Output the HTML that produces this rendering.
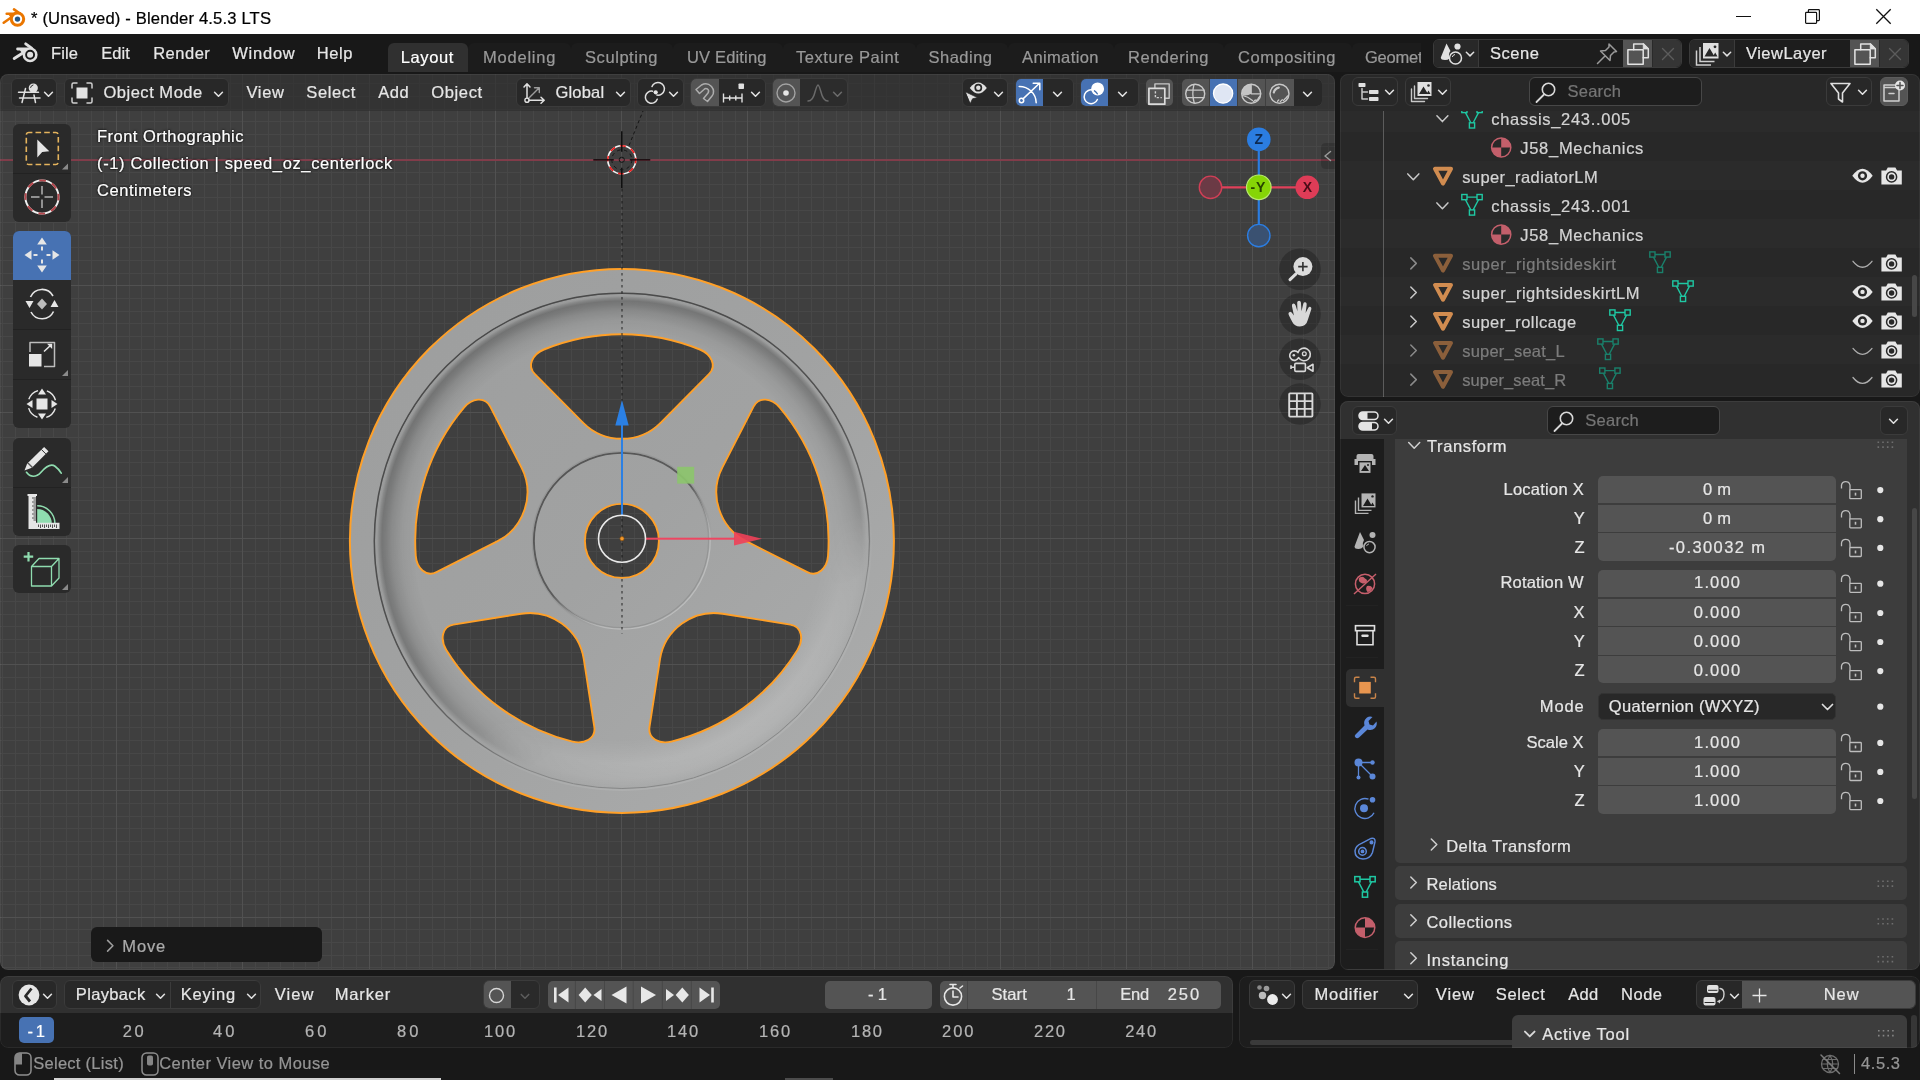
<!DOCTYPE html>
<html lang="en">
<head>
<meta charset="utf-8">
<title>* (Unsaved) - Blender 4.5.3 LTS</title>
<style>
*{box-sizing:border-box;margin:0;padding:0}
html,body{width:1920px;height:1080px;overflow:hidden;background:#181818}
body{font-family:"Liberation Sans",sans-serif;font-size:16.5px;color:#e6e6e6;position:relative}
.abs,.t,.area,.btn,svg.i,.fld{position:absolute}
.t{white-space:nowrap;line-height:20px;height:20px;-webkit-text-stroke-width:0.22px}
svg{overflow:visible;position:absolute}
svg.i{fill:none;stroke:#e0e0e0;stroke-width:1.6;stroke-linecap:round;stroke-linejoin:round}
.area{background:#303030;border-radius:8px;overflow:hidden}
.area:after{content:"";position:absolute;left:0;top:0;right:0;bottom:0;border:1px solid rgba(255,255,255,0.06);border-radius:8px;pointer-events:none}
.btn{background:#282828;border:1px solid #3b3b3b;border-radius:6px}
.fld{background:#545454;border-radius:5px}
.dim{color:#999}
/* title bar */
#titlebar{left:0;top:0;width:1920px;height:34px;background:#fff}
/* top bar */
#topbar{left:0;top:34px;width:1920px;height:40px;background:#181818}
.tab{position:absolute;top:8.5px;height:29.5px;background:#1c1c1c;border-radius:6px 6px 0 0}
.tab.on{background:#303030}
</style>
</head>
<body>
<div id="root" style="position:absolute;left:0;top:0;width:1920px;height:1080px;will-change:transform;overflow:hidden">
<svg width="0" height="0" style="left:0;top:0"><defs>
 <symbol id="chev" viewBox="0 0 12 8" overflow="visible"><path d="M1.5 1.5 L6 6 L10.5 1.5" fill="none" stroke="currentColor" stroke-width="1.8" stroke-linecap="round" stroke-linejoin="round"/></symbol>
 <symbol id="chevR" viewBox="0 0 8 12" overflow="visible"><path d="M1.5 1 L6.5 6 L1.5 11" fill="none" stroke="currentColor" stroke-width="1.5" stroke-linecap="round" stroke-linejoin="round"/></symbol>
</defs></svg>
<!-- ===== TITLE BAR ===== -->
<div id="titlebar" class="abs">
<svg style="left:0;top:0.500px" width="30" height="34" viewBox="0 0 30 34" fill="none" stroke-linecap="round">
<path d="M14 8.400L20.200 12.800M6.700 12.800H16M3.700 21.700L12.500 15.500" stroke="#ea7600" stroke-width="2.600"/>
<path d="M8 13L18 12L11 17Z" fill="#ea7600"/>
<circle cx="17.500" cy="18.100" r="6.200" fill="#fff" stroke="#ea7600" stroke-width="3"/>
<circle cx="17.500" cy="18.100" r="2.700" fill="#265787"/>
</svg>
<span class="t" style="left:31.0px;top:8.6px;letter-spacing:0.17px;font-size:16.6px;color:#000">* (Unsaved) - Blender 4.5.3 LTS</span>
<!-- window controls -->
<div class="abs" style="left:1736px;top:15.700px;width:15px;height:1.300px;background:#111"></div>
<svg style="left:1805px;top:9px" width="15" height="15" viewBox="0 0 15 15" fill="none" stroke="#111" stroke-width="1.200"><rect x="0.600" y="3.400" width="11" height="11" rx="0.800"/><path d="M3.400 3.200V1.400Q3.400 0.600 4.200 0.600H13.600Q14.400 0.600 14.400 1.400V10.800Q14.400 11.600 13.600 11.600H11.800"/></svg>
<svg style="left:1876px;top:9px" width="15" height="15" viewBox="0 0 15 15" fill="none" stroke="#111" stroke-width="1.300"><path d="M0.300 0.300L14.700 14.700M14.700 0.300L0.300 14.700"/></svg>
</div>
<!-- ===== TOP BAR ===== -->
<div id="topbar" class="abs">
<svg style="left:0;top:0" width="44" height="40" viewBox="0 0 44 40" fill="none" stroke-linecap="round">
<path d="M25.700 9.900L31.600 14.200M17.600 15H27M14.200 24.500L24 18.200" stroke="#e0e0e0" stroke-width="2.900"/>
<path d="M19.500 15.500L30 14L22.500 20Z" fill="#e0e0e0"/>
<circle cx="30.100" cy="20.800" r="7.500" fill="#e0e0e0"/>
<circle cx="30.100" cy="20.800" r="4" fill="none" stroke="#181818" stroke-width="1.900"/>
</svg>
<span class="t" style="left:51.0px;top:9.2px;letter-spacing:0.14px;">File</span><span class="t" style="left:101.2px;top:9.2px;letter-spacing:0.06px;">Edit</span><span class="t" style="left:153.2px;top:9.2px;letter-spacing:0.50px;">Render</span><span class="t" style="left:232.2px;top:9.2px;letter-spacing:0.78px;">Window</span><span class="t" style="left:316.8px;top:9.2px;letter-spacing:0.55px;">Help</span>
<div class="tab on" style="left:388px;width:80px"></div>
<div class="tab" style="left:468px;width:103px"></div>
<div class="tab" style="left:571px;width:102px"></div>
<div class="tab" style="left:673px;width:109.500px"></div>
<div class="tab" style="left:782.500px;width:133.500px"></div>
<div class="tab" style="left:916px;width:92px"></div>
<div class="tab" style="left:1008px;width:106px"></div>
<div class="tab" style="left:1114px;width:110px"></div>
<div class="tab" style="left:1224px;width:128px"></div>
<div class="tab" style="left:1352px;width:69px;border-radius:6px 0 0 0"></div>
<span class="t" style="left:400.8px;top:12.6px;letter-spacing:0.61px;color:#fff">Layout</span>
<span class="t dim" style="left:483.0px;top:12.6px;letter-spacing:0.78px;">Modeling</span><span class="t dim" style="left:585.0px;top:12.6px;letter-spacing:0.57px;">Sculpting</span><span class="t dim" style="left:687.0px;top:12.6px;letter-spacing:0.16px;">UV Editing</span><span class="t dim" style="left:796.0px;top:12.6px;letter-spacing:0.54px;">Texture Paint</span><span class="t dim" style="left:928.6px;top:12.6px;letter-spacing:0.47px;">Shading</span><span class="t dim" style="left:1022.0px;top:12.6px;letter-spacing:0.38px;">Animation</span><span class="t dim" style="left:1128.0px;top:12.6px;letter-spacing:0.53px;">Rendering</span><span class="t dim" style="left:1238.0px;top:12.6px;letter-spacing:0.57px;">Compositing</span>
<div class="abs" style="left:1352px;top:8px;width:69px;height:32px;overflow:hidden"><span class="t dim" style="left:13.0px;top:4.6px;letter-spacing:-0.21px;">Geometry Nodes</span></div>
<!-- scene selector -->
<div class="btn" style="left:1433px;top:5px;width:249px;height:29px;overflow:hidden;background:#1d1d1d">
 <div class="abs" style="left:0;top:0;width:45px;height:27px;background:#282828;border-right:1px solid #3b3b3b"></div>
 <div class="abs" style="left:189px;top:0;width:29px;height:27px;background:#545454"></div>
 <div class="abs" style="left:218px;top:0;width:30px;height:27px;background:#353535;border-left:1px solid #2a2a2a"></div>
</div>
<span class="t" style="left:1490.0px;top:9.0px;letter-spacing:0.55px;">Scene</span>
<!-- view layer selector -->
<div class="btn" style="left:1689px;top:5px;width:220px;height:29px;overflow:hidden;background:#1d1d1d">
 <div class="abs" style="left:0;top:0;width:45px;height:27px;background:#282828;border-right:1px solid #3b3b3b"></div>
 <div class="abs" style="left:160px;top:0;width:29px;height:27px;background:#545454"></div>
 <div class="abs" style="left:189px;top:0;width:30px;height:27px;background:#353535;border-left:1px solid #2a2a2a"></div>
</div>
<span class="t" style="left:1746.0px;top:9.0px;letter-spacing:0.48px;">ViewLayer</span>
<!-- scene icons -->
<svg style="left:1440px;top:8px" width="24" height="24" viewBox="0 0 24 24"><path d="M6.500 1.500L0.800 15.500Q0.800 18 5 18Q8 18 9.500 16.500Q8 12 10.500 9Z" fill="#e0e0e0"/><circle cx="17.500" cy="4.500" r="3.100" fill="#e0e0e0"/><circle cx="15.500" cy="16" r="6" fill="none" stroke="#e0e0e0" stroke-width="1.500"/><path d="M12.300 15A3.400 3.400 0 0 1 15 12.500" stroke="#e0e0e0" stroke-width="1" fill="none"/></svg>
<svg style="left:1465px;top:16.500px;color:#e0e0e0" width="10" height="6.500"><use href="#chev"/></svg>
<svg class="i" style="left:1596px;top:8px" width="23" height="23" viewBox="0 0 23 23"><path d="M13 2L20.500 9.500L18 10L14.500 13.500L14 18.500L4.500 9L9.500 8.500L13 5ZM9 14L1.500 21.500" stroke="#9a9a9a" stroke-width="1.500"/></svg>
<svg class="i" style="left:1627px;top:9px" width="22" height="22" viewBox="0 0 22 22"><path d="M6.700 6.700V0.900H16.300L21.300 5.900V14.700H16.200" stroke="#e0e0e0" stroke-width="1.500"/><path d="M16.300 0.900V5.900H21.300Z" fill="#e0e0e0" stroke="#e0e0e0" stroke-width="1"/><rect x="0.900" y="6.700" width="15.300" height="14.600" stroke="#e4e4e4" stroke-width="1.500"/></svg>
<svg class="i" style="left:1661.500px;top:14px" width="12" height="12" viewBox="0 0 12 12"><path d="M0.500 0.500L11.500 11.500M11.500 0.500L0.500 11.500" stroke="#5c5c5c" stroke-width="1.400"/></svg>
<svg style="left:1695px;top:8px" width="25" height="24" viewBox="0 0 25 24"><rect x="8" y="1" width="15.500" height="15.500" fill="#e0e0e0"/><path d="M9.500 14.500L14.500 6L19.500 14.500ZM18 14.500L20.200 10.500L22.500 14.500Z" fill="#282828"/><circle cx="20" cy="4.800" r="1.400" fill="#282828"/><path d="M5 5V19.500H19.500M1.500 8.500V23H16" stroke="#d0d0d0" stroke-width="1.500" fill="none"/></svg>
<svg style="left:1721.500px;top:16.500px;color:#e0e0e0" width="10" height="6.500"><use href="#chev"/></svg>
<svg class="i" style="left:1854px;top:9px" width="22" height="22" viewBox="0 0 22 22"><path d="M6.700 6.700V0.900H16.300L21.300 5.900V14.700H16.200" stroke="#e0e0e0" stroke-width="1.500"/><path d="M16.300 0.900V5.900H21.300Z" fill="#e0e0e0" stroke="#e0e0e0" stroke-width="1"/><rect x="0.900" y="6.700" width="15.300" height="14.600" stroke="#e4e4e4" stroke-width="1.500"/></svg>
<svg class="i" style="left:1888.500px;top:14px" width="12" height="12" viewBox="0 0 12 12"><path d="M0.500 0.500L11.500 11.500M11.500 0.500L0.500 11.500" stroke="#5c5c5c" stroke-width="1.400"/></svg>
</div>
<!-- ===== 3D VIEWPORT ===== -->
<div id="view3d" class="area" style="left:0;top:74px;width:1335px;height:895.700px;background:#3f3f3f">
<svg style="left:0;top:0" width="1335" height="895" viewBox="0 74 1335 895">
<defs>
 <path id="hole" d="M-78,-191.4 A206.5,206.5 0 0 1 78,-191.4 C89.1,-186.8 95.5,-175.2 87,-166.7 L38.7,-118.1 C17.5,-96.9 -17.5,-96.9 -38.7,-118.1 L-87,-166.7 C-95.5,-175.2 -89.1,-186.8 -78,-191.4 Z"/>
 <g id="holes">
  <use href="#hole"/><use href="#hole" transform="rotate(72)"/><use href="#hole" transform="rotate(144)"/><use href="#hole" transform="rotate(216)"/><use href="#hole" transform="rotate(288)"/>
  <circle r="37"/>
 </g>
 <mask id="wheelMask" maskUnits="userSpaceOnUse" x="-280" y="-280" width="560" height="560">
  <circle r="272" fill="#fff"/><use href="#holes" fill="#000"/>
 </mask>
 <linearGradient id="gUL" x1="0.25" y1="0.07" x2="0.75" y2="0.93"><stop offset="0" stop-color="#fff"/><stop offset="0.5" stop-color="#ddd"/><stop offset="0.66" stop-color="#777"/><stop offset="0.77" stop-color="#000"/></linearGradient>
 <linearGradient id="gLR" x1="0.25" y1="0.07" x2="0.75" y2="0.93"><stop offset="0.66" stop-color="#000"/><stop offset="0.8" stop-color="#999"/><stop offset="0.94" stop-color="#fff"/></linearGradient>
 <mask id="mUL" maskUnits="userSpaceOnUse" x="-280" y="-280" width="560" height="560"><rect x="-280" y="-280" width="560" height="560" fill="url(#gUL)"/></mask>
 <mask id="mLR" maskUnits="userSpaceOnUse" x="-280" y="-280" width="560" height="560"><rect x="-280" y="-280" width="560" height="560" fill="url(#gLR)"/></mask>
 <linearGradient id="gUL2" x1="0.2" y1="0.12" x2="0.8" y2="0.88"><stop offset="0" stop-color="#fff"/><stop offset="0.5" stop-color="#ccc"/><stop offset="0.56" stop-color="#555"/><stop offset="0.6" stop-color="#000"/></linearGradient>
 <linearGradient id="gLR2" x1="0.2" y1="0.12" x2="0.8" y2="0.88"><stop offset="0.5" stop-color="#000"/><stop offset="0.56" stop-color="#888"/><stop offset="0.62" stop-color="#fff"/></linearGradient>
 <mask id="mUL2" maskUnits="userSpaceOnUse" x="-280" y="-280" width="560" height="560"><rect x="-280" y="-280" width="560" height="560" fill="url(#gUL2)"/></mask>
 <mask id="mLR2" maskUnits="userSpaceOnUse" x="-280" y="-280" width="560" height="560"><rect x="-280" y="-280" width="560" height="560" fill="url(#gLR2)"/></mask>
 <radialGradient id="dishShadow" gradientUnits="userSpaceOnUse" cx="0" cy="0" r="247.6">
  <stop offset="0.84" stop-color="#000" stop-opacity="0"/><stop offset="0.89" stop-color="#000" stop-opacity="0.05"/><stop offset="0.93" stop-color="#000" stop-opacity="0.14"/><stop offset="0.955" stop-color="#000" stop-opacity="0.24"/><stop offset="0.969" stop-color="#000" stop-opacity="0.28"/><stop offset="0.981" stop-color="#000" stop-opacity="0.15"/><stop offset="0.989" stop-color="#000" stop-opacity="0.03"/><stop offset="1" stop-color="#000" stop-opacity="0"/>
 </radialGradient>
 <radialGradient id="dishLight" gradientUnits="userSpaceOnUse" cx="0" cy="0" r="247.6">
  <stop offset="0.80" stop-color="#fff" stop-opacity="0"/><stop offset="0.90" stop-color="#fff" stop-opacity="0.17"/><stop offset="0.96" stop-color="#fff" stop-opacity="0.12"/><stop offset="1" stop-color="#fff" stop-opacity="0.02"/>
 </radialGradient>
 <linearGradient id="faceG" gradientUnits="userSpaceOnUse" x1="-190" y1="-190" x2="190" y2="190"><stop offset="0" stop-color="#9e9f9f"/><stop offset="0.5" stop-color="#a1a2a2"/><stop offset="1" stop-color="#a9aaaa"/></linearGradient>
</defs>
<path fill="#474747" d="M2 74h1v895h-1zM15 74h1v895h-1zM28 74h1v895h-1zM40 74h1v895h-1zM53 74h1v895h-1zM66 74h1v895h-1zM78 74h1v895h-1zM91 74h1v895h-1zM103 74h1v895h-1zM129 74h1v895h-1zM141 74h1v895h-1zM154 74h1v895h-1zM167 74h1v895h-1zM179 74h1v895h-1zM192 74h1v895h-1zM204 74h1v895h-1zM217 74h1v895h-1zM230 74h1v895h-1zM255 74h1v895h-1zM268 74h1v895h-1zM280 74h1v895h-1zM293 74h1v895h-1zM305 74h1v895h-1zM318 74h1v895h-1zM331 74h1v895h-1zM343 74h1v895h-1zM356 74h1v895h-1zM381 74h1v895h-1zM394 74h1v895h-1zM406 74h1v895h-1zM419 74h1v895h-1zM432 74h1v895h-1zM444 74h1v895h-1zM457 74h1v895h-1zM470 74h1v895h-1zM482 74h1v895h-1zM507 74h1v895h-1zM520 74h1v895h-1zM533 74h1v895h-1zM545 74h1v895h-1zM558 74h1v895h-1zM571 74h1v895h-1zM583 74h1v895h-1zM596 74h1v895h-1zM608 74h1v895h-1zM634 74h1v895h-1zM646 74h1v895h-1zM659 74h1v895h-1zM672 74h1v895h-1zM684 74h1v895h-1zM697 74h1v895h-1zM709 74h1v895h-1zM722 74h1v895h-1zM735 74h1v895h-1zM760 74h1v895h-1zM773 74h1v895h-1zM785 74h1v895h-1zM798 74h1v895h-1zM811 74h1v895h-1zM823 74h1v895h-1zM836 74h1v895h-1zM848 74h1v895h-1zM861 74h1v895h-1zM886 74h1v895h-1zM899 74h1v895h-1zM912 74h1v895h-1zM924 74h1v895h-1zM937 74h1v895h-1zM949 74h1v895h-1zM962 74h1v895h-1zM975 74h1v895h-1zM987 74h1v895h-1zM1013 74h1v895h-1zM1025 74h1v895h-1zM1038 74h1v895h-1zM1050 74h1v895h-1zM1063 74h1v895h-1zM1076 74h1v895h-1zM1088 74h1v895h-1zM1101 74h1v895h-1zM1114 74h1v895h-1zM1139 74h1v895h-1zM1151 74h1v895h-1zM1164 74h1v895h-1zM1177 74h1v895h-1zM1189 74h1v895h-1zM1202 74h1v895h-1zM1215 74h1v895h-1zM1227 74h1v895h-1zM1240 74h1v895h-1zM1265 74h1v895h-1zM1278 74h1v895h-1zM1290 74h1v895h-1zM1303 74h1v895h-1zM1316 74h1v895h-1zM1328 74h1v895h-1zM0 83h1335v1h-1335zM0 96h1335v1h-1335zM0 109h1335v1h-1335zM0 121h1335v1h-1335zM0 134h1335v1h-1335zM0 146h1335v1h-1335zM0 172h1335v1h-1335zM0 184h1335v1h-1335zM0 197h1335v1h-1335zM0 210h1335v1h-1335zM0 222h1335v1h-1335zM0 235h1335v1h-1335zM0 247h1335v1h-1335zM0 260h1335v1h-1335zM0 273h1335v1h-1335zM0 298h1335v1h-1335zM0 311h1335v1h-1335zM0 323h1335v1h-1335zM0 336h1335v1h-1335zM0 349h1335v1h-1335zM0 361h1335v1h-1335zM0 374h1335v1h-1335zM0 386h1335v1h-1335zM0 399h1335v1h-1335zM0 424h1335v1h-1335zM0 437h1335v1h-1335zM0 450h1335v1h-1335zM0 462h1335v1h-1335zM0 475h1335v1h-1335zM0 487h1335v1h-1335zM0 500h1335v1h-1335zM0 513h1335v1h-1335zM0 525h1335v1h-1335zM0 551h1335v1h-1335zM0 563h1335v1h-1335zM0 576h1335v1h-1335zM0 588h1335v1h-1335zM0 601h1335v1h-1335zM0 614h1335v1h-1335zM0 626h1335v1h-1335zM0 639h1335v1h-1335zM0 652h1335v1h-1335zM0 677h1335v1h-1335zM0 689h1335v1h-1335zM0 702h1335v1h-1335zM0 715h1335v1h-1335zM0 727h1335v1h-1335zM0 740h1335v1h-1335zM0 753h1335v1h-1335zM0 765h1335v1h-1335zM0 778h1335v1h-1335zM0 803h1335v1h-1335zM0 816h1335v1h-1335zM0 828h1335v1h-1335zM0 841h1335v1h-1335zM0 854h1335v1h-1335zM0 866h1335v1h-1335zM0 879h1335v1h-1335zM0 891h1335v1h-1335zM0 904h1335v1h-1335zM0 929h1335v1h-1335zM0 942h1335v1h-1335zM0 955h1335v1h-1335zM0 967h1335v1h-1335z"/>
<path fill="#515151" d="M116 74h1v895h-1zM242 74h1v895h-1zM369 74h1v895h-1zM495 74h1v895h-1zM621 74h1v895h-1zM747 74h1v895h-1zM874 74h1v895h-1zM1000 74h1v895h-1zM1126 74h1v895h-1zM1252 74h1v895h-1zM0 159h1335v1h-1335zM0 285h1335v1h-1335zM0 412h1335v1h-1335zM0 538h1335v1h-1335zM0 664h1335v1h-1335zM0 790h1335v1h-1335zM0 917h1335v1h-1335z"/>
<!-- x axis line -->
<rect x="0" y="159.3" width="1335" height="1.6" fill="#8a3b4b"/>
<!-- wheel -->
<g transform="translate(621.9 540.9)">
 <g mask="url(#wheelMask)">
  <circle r="273" fill="url(#faceG)"/>
  <circle r="247.6" fill="none" stroke="#868787" stroke-width="1"/>
  <circle r="247.6" fill="url(#dishShadow)" mask="url(#mUL)"/>
  <circle r="247.6" fill="url(#dishLight)" mask="url(#mLR)"/>
  <circle r="247.6" fill="none" stroke="#484848" stroke-width="1.5" mask="url(#mUL)"/>
  <circle r="249.2" fill="none" stroke="#b4b5b5" stroke-width="1.6" mask="url(#mLR)" opacity="0.7"/>
  <circle r="88" fill="none" stroke="#4a4a4a" stroke-width="1.9" mask="url(#mUL2)"/>
  <circle r="89.6" fill="none" stroke="#8c8d8d" stroke-width="1.2" mask="url(#mUL2)" opacity="0.6"/>
  <circle r="88.3" fill="none" stroke="#bcbdbd" stroke-width="1.3" mask="url(#mLR2)"/>
  <circle r="86.6" fill="none" stroke="#8f9090" stroke-width="1.1" mask="url(#mLR2)" opacity="0.8"/>
 </g>
 <circle r="272" fill="none" stroke="#ffa028" stroke-width="2"/>
 <use href="#holes" fill="none" stroke="#ffa028" stroke-width="1.9"/>
</g>
<!-- relationship dashed lines -->
<path d="M622 189 V633.5" stroke="#141414" stroke-width="1.1" stroke-dasharray="2.6 3.4" fill="none" opacity="0.8"/>
<path d="M629 145.5 L643 111" stroke="#141414" stroke-width="1" stroke-dasharray="3.2 2.8" fill="none"/>
<!-- 3d cursor -->
<g transform="translate(621.8 159.8)">
 <circle r="14" fill="none" stroke="#f3f3f3" stroke-width="1.6"/>
 <circle r="14" fill="none" stroke="#ee1c1c" stroke-width="1.6" stroke-dasharray="5.5 5.5" transform="rotate(-8)"/>
 <path d="M-28.5 0H-8M8 0H28.5M0 -28.5V-8M0 8V28.5" stroke="#000" stroke-width="1.2" fill="none"/>
 <circle r="10" fill="none" stroke="#151515" stroke-width="1" stroke-dasharray="3.5 3.5"/>
 <circle r="2.6" fill="none" stroke="#151515" stroke-width="1"/>
</g>
<!-- move gizmo -->
<rect x="621" y="425" width="2" height="90" fill="#2b80e4"/>
<path d="M622 400 L628.7 425.6 L615.3 425.6 Z" fill="#2b80e4"/>
<rect x="646" y="537.7" width="89" height="2" fill="#ee4661"/>
<path d="M762 538.7 L734 531.8 L734 545.6 Z" fill="#f04058" opacity="0.9"/>
<rect x="677.2" y="466.8" width="17" height="16.8" fill="#8cc46c" opacity="0.92"/>
<circle cx="622" cy="538.7" r="23.5" fill="none" stroke="#e9e9e9" stroke-width="1.6"/>
<circle cx="622" cy="538.7" r="2.1" fill="#f39a2c" stroke="#8a4a05" stroke-width="0.6"/>
</svg>
<!-- header -->
<div class="abs" style="left:0;top:0;width:1335px;height:37px;background:rgba(46,46,46,0.68)"></div>
<!-- editor type -->
<div class="btn" style="left:11px;top:4px;width:46px;height:29px"></div>
<svg class="i" style="left:17px;top:8px" width="24" height="22" viewBox="0 0 24 22"><path d="M1.5 10.2H21.5M2.5 16H23M8.5 6.5L5 20.5M17 13L18.5 20.5" stroke-width="1.5"/><circle cx="16.3" cy="6" r="4.6" fill="#e0e0e0" stroke="none"/><path d="M13.6 5.4A3 3 0 0 1 16 3" stroke="#2b2b2b" stroke-width="1"/></svg>
<svg style="left:43px;top:17px;color:#e0e0e0" width="11" height="7"><use href="#chev"/></svg>
<!-- object mode -->
<div class="btn" style="left:64px;top:4px;width:165px;height:29px"></div>
<svg class="i" style="left:71px;top:8px" width="22" height="22" viewBox="0 0 22 22"><rect x="5.5" y="5.5" width="11" height="11" fill="#e4e4e4" stroke="none"/><path d="M1 6V2.5Q1 1 2.5 1H6M16 1h3.5Q21 1 21 2.5V6M21 16v3.5Q21 21 19.500 21H16M6 21H2.5Q1 21 1 19.500V16" stroke="#cfcfcf" stroke-width="1.5"/></svg>
<span class="t" style="left:103.4px;top:8.0px;letter-spacing:0.53px;">Object Mode</span>
<svg style="left:213px;top:17px;color:#e0e0e0" width="11" height="7"><use href="#chev"/></svg>
<span class="t" style="left:246.4px;top:8.0px;letter-spacing:0.71px;">View</span><span class="t" style="left:306.3px;top:8.0px;letter-spacing:0.63px;">Select</span><span class="t" style="left:378.2px;top:8.0px;letter-spacing:0.62px;">Add</span><span class="t" style="left:431.2px;top:8.0px;letter-spacing:0.66px;">Object</span>
<!-- orientation -->
<div class="btn" style="left:516px;top:4px;width:115px;height:29px"></div>
<svg class="i" style="left:523px;top:7.500px" width="23" height="22" viewBox="0 0 23 22"><path d="M5.200 16.800L16 6M11.500 5.700H16.300V10.500" stroke="#9c9c9c" stroke-width="1.400"/><path d="M4 16.300V2M1 5L4 1.800L7 5M5.800 18.200H21M18 15.200L21.200 18.200L18 21.200" stroke-width="1.500"/><circle cx="4" cy="18.200" r="2.100" stroke-width="1.400"/></svg>
<span class="t" style="left:555.4px;top:8.0px;letter-spacing:0.22px;">Global</span>
<svg style="left:615px;top:17px;color:#e0e0e0" width="11" height="7"><use href="#chev"/></svg>
<!-- pivot -->
<div class="btn" style="left:636.5px;top:4px;width:47px;height:29px"></div>
<svg class="i" style="left:644px;top:8px" width="22" height="22" viewBox="0 0 22 22"><path d="M8 4.600A6.400 6.400 0 1 1 12.900 13.100M13.200 17.300A6.100 6.100 0 1 1 8.600 9.200" stroke-width="1.500"/><circle cx="11.700" cy="10.300" r="2.100" fill="#e8e8e8" stroke="none"/></svg>
<svg style="left:668px;top:17px;color:#e0e0e0" width="11" height="7"><use href="#chev"/></svg>
<!-- snap -->
<div class="btn" style="left:689.5px;top:4px;width:76px;height:29px;overflow:hidden"><div class="abs" style="left:0;top:0;width:28px;height:27px;background:#545454"></div></div>
<svg class="i" style="left:694px;top:9px" width="22" height="21" viewBox="0 0 22 21"><path d="M2 6.500L7.500 2Q13 -1 17.500 3.500Q21.500 8.500 18 13L13.500 18.500L9.500 15.500L14 10Q15.500 7.500 13.500 6Q11.500 4.800 10 6.500L5.500 10.500Z" stroke="#adadad" stroke-width="1.5"/></svg>
<svg class="i" style="left:722px;top:9px" width="22" height="21" viewBox="0 0 22 21"><path d="M1.500 10.500V19.500M20 10.500V19.500M1.500 15H20M7.700 12.500V17.500M13.800 12.500V17.500" stroke-width="1.400" stroke-linecap="butt"/><rect x="16.500" y="0.500" width="5.500" height="5.500" rx="0.800" fill="#e0e0e0" stroke="none"/></svg>
<svg style="left:750px;top:17px;color:#e0e0e0" width="11" height="7"><use href="#chev"/></svg>
<!-- proportional -->
<div class="btn" style="left:771.5px;top:4px;width:76px;height:29px;overflow:hidden;background:#2c2c2c"><div class="abs" style="left:0;top:0;width:27px;height:27px;background:#545454"></div></div>
<svg class="i" style="left:776px;top:9px" width="20" height="20" viewBox="0 0 20 20"><circle cx="10" cy="10" r="9" stroke="#a2a2a2" stroke-width="1.400"/><circle cx="10" cy="10" r="2.800" fill="#e6e6e6" stroke="none"/></svg>
<svg class="i" style="left:807px;top:10px" width="22" height="18" viewBox="0 0 22 18"><path d="M1 17Q6 17 8 8Q10 1 11 1Q12 1 14 8Q16 17 21 17" stroke="#6a6a6a" stroke-width="1.5"/></svg>
<svg style="left:832px;top:17px;color:#6a6a6a" width="11" height="7"><use href="#chev"/></svg>
<!-- visibility -->
<div class="btn" style="left:962px;top:4px;width:46px;height:29px"></div>
<svg class="i" style="left:965px;top:8px" width="24" height="22" viewBox="0 0 24 22"><path d="M4.800 5.900Q9 0.400 13.300 0.400Q17.600 0.400 21.800 5.900Q17.600 11.400 13.300 11.400Q9 11.400 4.800 5.900Z" fill="#e0e0e0" stroke="none"/><circle cx="13.300" cy="5.700" r="3.900" fill="#282828" stroke="none"/><circle cx="13.300" cy="5.700" r="2.200" fill="#e0e0e0" stroke="none"/><path d="M0.400 9.800L12.600 15.600L7.600 16.800L5.300 21.500Z" fill="#e0e0e0" stroke="#282828" stroke-width="0.800"/></svg>
<svg style="left:993px;top:17px;color:#e0e0e0" width="11" height="7"><use href="#chev"/></svg>
<!-- gizmo -->
<div class="btn" style="left:1015px;top:4px;width:59px;height:29px;overflow:hidden"><div class="abs" style="left:0;top:0;width:27px;height:27px;background:#4772b3"></div></div>
<svg class="i" style="left:1019px;top:8px" width="22" height="22" viewBox="0 0 22 22"><path d="M0.200 4.400A16.800 16.800 0 0 1 17.200 20.700M4 16.900L20.500 1.200M14.200 1.300H20.800V7.800" stroke="#fff" stroke-width="1.500"/><circle cx="2.500" cy="18.500" r="2.200" stroke="#fff" stroke-width="1.500"/></svg>
<svg style="left:1052px;top:17px;color:#e0e0e0" width="11" height="7"><use href="#chev"/></svg>
<!-- overlay -->
<div class="btn" style="left:1080px;top:4px;width:59px;height:29px;overflow:hidden"><div class="abs" style="left:0;top:0;width:27px;height:27px;background:#4772b3"></div></div>
<svg class="i" style="left:1084px;top:8px" width="22" height="22" viewBox="0 0 22 22"><circle cx="13.600" cy="6.900" r="6.500" fill="#fff" stroke="none"/><path d="M9.500 8.300A6.900 6.900 0 1 0 13.400 17.500" stroke="#fff" stroke-width="1.500"/><path d="M10.500 8.800A6.900 6.900 0 0 1 13.300 11.800" stroke="#4772b3" stroke-width="1.400"/></svg>
<svg style="left:1117px;top:17px;color:#e0e0e0" width="11" height="7"><use href="#chev"/></svg>
<!-- xray -->
<div class="abs" style="left:1146px;top:5px;width:27px;height:27.300px;background:#545454;border-radius:5px"></div>
<svg class="i" style="left:1148px;top:8.500px" width="22" height="22" viewBox="0 0 22 22"><path d="M6.900 5V0.900H21.200V15.300H17.200" stroke="#c8c8c8" stroke-width="1.400"/><rect x="0.900" y="5.400" width="15.900" height="15.800" stroke="#dcdcdc" stroke-width="1.700"/><path d="M7.400 8.300V14.600H13.800" stroke="#d0d0d0" stroke-width="1.400" stroke-dasharray="2.200 1.600" stroke-linecap="butt"/></svg>
<!-- shading -->
<div class="abs" style="left:1182px;top:5px;width:140px;height:27.300px;background:#545454;border-radius:5px;overflow:hidden">
 <div class="abs" style="left:28px;top:0;width:27.300px;height:28px;background:#4772b3"></div>
 <div class="abs" style="left:27.300px;top:0;width:0.700px;height:28px;background:#3f3f3f"></div>
 <div class="abs" style="left:55.300px;top:0;width:0.700px;height:28px;background:#3f3f3f"></div>
 <div class="abs" style="left:83.300px;top:0;width:0.700px;height:28px;background:#3f3f3f"></div>
 <div class="abs" style="left:111.500px;top:0;width:29px;height:28px;background:#282828"></div>
</div>
<svg class="i" style="left:1185px;top:8.800px" width="22" height="22" viewBox="0 0 22 22"><circle cx="10.200" cy="10.800" r="9.500" stroke="#c8c8c8" stroke-width="1.400"/><path d="M1.500 7.200H18.900M1.500 14.600H18.900M9 1.400Q6.500 10.800 9.300 20.200" stroke="#c8c8c8" stroke-width="1.300"/></svg>
<svg class="i" style="left:1213px;top:8.800px" width="22" height="22" viewBox="0 0 22 22"><circle cx="10.100" cy="10.600" r="9.600" fill="#dfe6f4" stroke="#fff" stroke-width="1.300"/></svg>
<svg class="i" style="left:1241px;top:8.800px" width="22" height="22" viewBox="0 0 22 22"><path d="M10.200 10.800V1.300A9.500 9.500 0 0 0 0.700 10.800Q1 11.500 2 12.200Q6 13.500 10.200 10.800Z" fill="#c4c4c4" stroke="none"/><circle cx="10.200" cy="10.800" r="9.500" stroke="#c8c8c8" stroke-width="1.400"/><path d="M10.200 1.300V10.800H19.700M1.500 12.500Q7 13.500 11.500 17.500" stroke="#c8c8c8" stroke-width="1.200"/><path d="M12.500 18.800L14.300 17M15.200 17.600L17.200 15.600M17.500 15L19 13.200" stroke="#c8c8c8" stroke-width="1.300"/></svg>
<svg class="i" style="left:1269px;top:8.800px" width="22" height="22" viewBox="0 0 22 22"><circle cx="10.500" cy="10.800" r="9.500" stroke="#c8c8c8" stroke-width="1.400"/><path d="M4.800 9.500A6.800 6.800 0 0 1 9.800 4.600" stroke="#c8c8c8" stroke-width="2.200"/><path d="M8.500 18.300L9.800 17M11.300 18.600L13.300 16.600M14.300 17.600L16.600 15.300M17 15L18.600 13" stroke="#c8c8c8" stroke-width="1.300"/></svg>
<svg style="left:1301.500px;top:17px;color:#e0e0e0" width="11" height="7"><use href="#chev"/></svg>
<!-- toolbar -->
<div class="abs" style="left:13px;top:50px;width:58px;height:98px;background:#2a2a2a;border-radius:6px"></div>
<div class="abs" style="left:13px;top:98.5px;width:58px;height:1px;background:#222"></div>
<div class="abs" style="left:13px;top:157px;width:58px;height:197px;background:#2a2a2a;border-radius:6px;overflow:hidden"><div class="abs" style="left:0;top:0;width:58px;height:48.5px;background:#4772b3"></div></div>
<div class="abs" style="left:13px;top:255px;width:58px;height:1px;background:#222"></div>
<div class="abs" style="left:13px;top:304.5px;width:58px;height:1px;background:#222"></div>
<div class="abs" style="left:13px;top:364px;width:58px;height:97.5px;background:#2a2a2a;border-radius:6px"></div>
<div class="abs" style="left:13px;top:412.5px;width:58px;height:1px;background:#222"></div>
<div class="abs" style="left:13px;top:471px;width:58px;height:48px;background:#2a2a2a;border-radius:6px"></div>
<svg style="left:13px;top:50px" width="58" height="470" viewBox="13 124 58 470" fill="none" stroke-linecap="butt" stroke-linejoin="round">
 <!-- select box -->
 <rect x="26.3" y="132.5" width="32" height="32" rx="2.5" stroke="#e5b45d" stroke-width="1.600" stroke-dasharray="5.600 3.100" stroke-dashoffset="2"/>
 <path d="M37.3 139.5 L49.3 151.2 L42.2 152 L37.3 157.5 Z" fill="#e6e6e6"/>
 <path d="M68 163.500V169.500H62Z" fill="#8a8a8a"/>
 <!-- cursor -->
 <circle cx="42" cy="197" r="16.600" stroke="#f0f0f0" stroke-width="1.900"/>
 <circle cx="42" cy="197" r="16.600" stroke="#b5464c" stroke-width="1.900" stroke-dasharray="6.520 6.520" transform="rotate(-11 42 197)"/>
 <path d="M31 197H39.500M44.500 197H53M42 186V194.500M42 199.500V208" stroke="#b4b4b4" stroke-width="1.500"/>
 <!-- move -->
 <g fill="#e6e6e6" stroke="none"><path d="M42 237.500L46.800 244.500H37.200ZM42 272.500L46.800 265.500H37.200ZM24.500 255L31.500 250.200V259.800ZM59.500 255L52.500 250.200V259.800Z"/><rect x="41" y="246.500" width="2" height="4"/><rect x="41" y="259.500" width="2" height="4"/><rect x="33.500" y="254" width="4" height="2"/><rect x="46.500" y="254" width="4" height="2"/></g>
 <!-- rotate -->
 <path d="M30.500 297A12.500 12.500 0 0 1 53 296M53.500 311.500A12.500 12.500 0 0 1 31 312" stroke="#e6e6e6" stroke-width="1.600"/>
 <path d="M42 298.500L47 304L42 309.500L37 304Z" fill="#bdbdbd"/>
 <path d="M25.500 301H33.500L29.500 308ZM50.500 307H58.500L54.500 300Z" fill="#e6e6e6"/>
 <!-- scale -->
 <rect x="29" y="354" width="12.500" height="12.500" fill="#e6e6e6"/>
 <path d="M30 352V342.500H54.500V366.500H44" stroke="#bdbdbd" stroke-width="1.500"/>
 <path d="M44 351.500L51.500 344.500" stroke="#e6e6e6" stroke-width="1.500"/><path d="M47 343.800H52.200V349Z" fill="#e6e6e6"/>
 <path d="M68 370V376H62Z" fill="#8a8a8a"/>
 <!-- transform -->
 <circle cx="42" cy="404" r="14" stroke="#e6e6e6" stroke-width="1.400" stroke-dasharray="13 9" stroke-dashoffset="-4.500"/>
 <rect x="36.500" y="398.500" width="11" height="11" fill="#e6e6e6"/>
 <path d="M42 388.500L46 394.500H38ZM42 419.500L46 413.500H38ZM26.500 404L32.500 400V408ZM57.500 404L51.500 400V408Z" fill="#e6e6e6"/>
 <!-- annotate -->
 <path d="M26.500 472.300C30 477.300 36 477.800 41 472.200S51 463.300 55 466.300S60 471 61.200 473.200" stroke="#8fdcaf" stroke-width="1.700" stroke-linecap="round"/>
 <path d="M30 465.200L46.300 449.100" stroke="#e6e6e6" stroke-width="6.200" stroke-linecap="butt"/>
 <path d="M24.500 470.600L27.300 463.300L31.800 467.800Z" fill="#e6e6e6"/>
 <path d="M28 462.700L32.500 467.200M41.300 449.400L45.800 453.900" stroke="#2b2b2b" stroke-width="1"/>
 <path d="M68 477V483H62Z" fill="#8a8a8a"/>
 <!-- measure -->
 <path d="M37.200 505.800A17.700 17.700 0 0 1 54.900 523.500" stroke="#8fdcaf" stroke-width="1.500"/>
 <path d="M37.200 523.500V508.900A14.600 14.600 0 0 1 51.800 523.500Z" fill="#8fdcaf"/>
 <path d="M27.500 494H37V496H36V522.800H59.500V529H28.500V496H27.500Z" fill="#e6e6e6"/>
 <path d="M32 498H36M33.500 500H36M32 502H36M33.500 504H36M32 506H36M33.500 508H36M32 510H36M33.500 512H36M32 514H36M33.500 516H36M32 518H36M33.500 520H36M38.500 524.500V527M40.500 524.500V528M42.500 524.500V527M44.500 524.500V528M46.500 524.500V527M48.500 524.500V528M50.500 524.500V527M52.500 524.500V528M54.500 524.500V527M56.500 524.500V528" stroke="#2b2b2b" stroke-width="0.800"/>
 <!-- add cube -->
 <path d="M28.500 552V561.500M23.700 556.700H33.200" stroke="#8fdcaf" stroke-width="2.200"/>
 <path d="M31.500 566.500H51.500V586H31.500ZM31.500 566.500L39 558.500H59L51.500 566.500M59 558.500V578L51.500 586" stroke="#8fdcaf" stroke-width="1.300"/>
 <path d="M68 584V590H62Z" fill="#8a8a8a"/>
</svg>
<!-- overlay text -->
<div style="text-shadow:0 0 2px #000,0 0 3px rgba(0,0,0,.6);-webkit-text-stroke:0.300px #fff">
<span class="t" style="left:97.0px;top:51.8px;letter-spacing:0.47px;color:#fff">Front Orthographic</span>
<span class="t" style="left:97.0px;top:78.8px;letter-spacing:0.64px;color:#fff">(-1) Collection | speed_oz_centerlock</span>
<span class="t" style="left:97.0px;top:105.6px;letter-spacing:0.56px;color:#fff">Centimeters</span>
</div>
<!-- move panel -->
<div class="abs" style="left:91px;top:853.200px;width:230.500px;height:35.300px;background:#191919;border-radius:6px"></div>
<svg style="left:106px;top:864.500px;color:#9c9c9c" width="8.500" height="13.500"><use href="#chevR"/></svg>
<span class="t" style="left:122.3px;top:862.4px;letter-spacing:0.88px;color:#ababab">Move</span>
<!-- nav gizmo -->
<svg style="left:0;top:0.800px" width="1335" height="400" viewBox="0 74 1335 400" font-family="Liberation Sans, sans-serif" font-size="15" font-weight="bold" text-anchor="middle">
 <path d="M1258.800 186.300V150M1258.800 186.300V223" stroke="#2b7de1" stroke-width="2.200"/>
 <path d="M1222 186.300H1296" stroke="#e1405a" stroke-width="2.200"/>
 <circle cx="1210.500" cy="186.300" r="11.200" fill="#6b3a45" stroke="#d03f56" stroke-width="1.400"/>
 <circle cx="1258.800" cy="234.600" r="11.200" fill="#3a5171" stroke="#2b7de1" stroke-width="1.400"/>
 <circle cx="1258.800" cy="138.400" r="11.800" fill="#2b7de1"/>
 <circle cx="1307.300" cy="186.300" r="11.800" fill="#de3c57"/>
 <circle cx="1258.800" cy="186.300" r="12.300" fill="#86d506" stroke="#b9e96e" stroke-width="1.200"/>
 <text x="1258.800" y="143.400" fill="#0d2a52" font-weight="bold" font-size="14">Z</text>
 <text x="1307.300" y="191.300" fill="#4a0d18" font-weight="bold" font-size="14">X</text>
 <text x="1258.400" y="191.300" fill="#274400" font-weight="bold" font-size="14" letter-spacing="0.800">-Y</text>
 <!-- nav buttons -->
 <g fill="rgba(0,0,0,0.235)"><circle cx="1300" cy="268.200" r="20.800"/><circle cx="1300" cy="313" r="20.800"/><circle cx="1300" cy="358.200" r="20.800"/><circle cx="1300" cy="403.100" r="20.800"/></g>
 <!-- zoom -->
 <g fill="none" stroke="#dcdcdc" stroke-linecap="round"><circle cx="1302.900" cy="265.600" r="9.500" fill="#dcdcdc" stroke="none"/><path d="M1296 272.800L1290 278.600" stroke-width="3"/><path d="M1298.200 265.600H1307.600M1302.900 260.900V270.300" stroke="#303030" stroke-width="1.600" stroke-linecap="butt"/></g>
 <!-- hand -->
 <g transform="translate(1300 313) scale(1.17) translate(-1300.700 -312.300)"><path d="M1291.500 314Q1290 311 1292 310.500Q1293.500 310.200 1295 313L1295.500 313.500L1293.800 305.500Q1293.600 303.500 1295 303.300Q1296.400 303.200 1297 305L1298.500 310L1298.300 302.500Q1298.400 301 1299.900 301Q1301.300 301 1301.500 302.500L1302 310L1303.500 303.500Q1304 302 1305.300 302.300Q1306.600 302.700 1306.400 304.300L1305.500 311.500L1307.800 307Q1308.600 305.700 1309.800 306.300Q1310.800 307 1310.300 308.500L1307.500 317Q1306 323 1300.500 323Q1296 323 1294 319Z" fill="#d8d8d8"/></g>
 <!-- camera -->
 <g fill="none" stroke="#d8d8d8" stroke-width="1.600" stroke-linejoin="round"><path d="M1298.600 356.700A4.700 4.700 0 1 1 1298 351.600A6.300 6.300 0 1 1 1298.600 356.700Z"/><circle cx="1293.800" cy="354.300" r="1.300" fill="#d8d8d8" stroke="none"/><circle cx="1304.300" cy="352.700" r="1.900" stroke-width="1.300"/><rect x="1294.800" y="362.400" width="10.600" height="8" rx="1.200"/><path d="M1291 364.300V368M1291 366.200H1294.500M1307.200 366.700L1313 363.300V370.200Z"/></g>
 <!-- grid -->
 <g fill="none" stroke="#d8d8d8" stroke-width="1.900"><rect x="1289.200" y="392.400" width="23.200" height="23.200" rx="0.800"/><path d="M1296.900 392.400V415.600M1304.700 392.400V415.600M1289.200 400.100H1312.400M1289.200 407.900H1312.400"/></g>
 <!-- sidebar toggle -->
 <path d="M1335 142H1326Q1321 142 1321 147V163Q1321 168 1326 168H1335Z" fill="rgba(0,0,0,0.17)"/>
 <path d="M1330.500 150.500L1325 155L1330.500 159.500" fill="none" stroke="#9a9a9a" stroke-width="1.500" stroke-linecap="round" stroke-linejoin="round"/>
</svg>
</div>
<!-- ===== OUTLINER ===== -->
<div id="outliner" class="area" style="left:1340px;top:74px;width:580px;height:322.600px;background:#282828">
<div class="abs" style="left:0;top:28.8px;width:580px;height:29.03px;background:#2b2b2b"></div>
<div class="abs" style="left:0;top:86.8px;width:580px;height:29.03px;background:#2b2b2b"></div>
<div class="abs" style="left:0;top:144.9px;width:580px;height:29.03px;background:#2b2b2b"></div>
<div class="abs" style="left:0;top:203.0px;width:580px;height:29.03px;background:#2b2b2b"></div>
<div class="abs" style="left:0;top:261.0px;width:580px;height:29.03px;background:#2b2b2b"></div>
<div class="abs" style="left:0;top:0;width:580px;height:29px;background:#282828"></div>
<div class="abs" style="left:43.0px;top:36px;width:1px;height:290px;background:#5c5c5c"></div>
<svg style="left:0;top:0" width="580" height="322" viewBox="1340 74 580 322"><path d="M1436.9 115.8L1442.4 121.6L1447.9 115.8" stroke="#c8c8c8" stroke-width="1.5" fill="none" stroke-linecap="round" stroke-linejoin="round"/><g transform="translate(1472.0 117.6)" stroke="#1fc8a3" stroke-width="1.4" fill="none"><path d="M-5 -7.600H5M-6.500 -5L-1.200 5.200M6.500 -5L1.200 5.200"/><rect x="-10.200" y="-10.200" width="5.200" height="5.200"/><rect x="5" y="-10.200" width="5.200" height="5.200"/><rect x="-2.600" y="5.200" width="5.200" height="5.200"/></g><g transform="translate(1501.2 147.5)"><path d="M0 0V-9.6A9.6 9.6 0 0 1 9.6 0ZM0 0V9.6A9.6 9.6 0 0 1 -9.6 0Z" fill="#c35f6b"/><circle r="9.6" fill="none" stroke="#c35f6b" stroke-width="1.500"/></g><path d="M1407.8 173.9L1413.3 179.7L1418.8 173.9" stroke="#c8c8c8" stroke-width="1.5" fill="none" stroke-linecap="round" stroke-linejoin="round"/><path d="M1435.0 168.8H1451.0L1443.0 183.6Z" stroke="#d18c50" stroke-width="4" fill="none" stroke-linejoin="round"/><g transform="translate(1862.5 175.8)"><path d="M-10.200 0Q-5 -7 0 -7Q5 -7 10.200 0Q5 7 0 7Q-5 7 -10.200 0Z" fill="#e6e6e6"/><circle r="4.600" fill="#282828"/><circle r="2.200" fill="#e6e6e6"/></g><g transform="translate(1891.6 175.9)"><path d="M-10.200 -5.500H-5.500L-3.800 -8.500H3.800L5.500 -5.500H10.200V8.500H-10.200Z" fill="#e6e6e6"/><circle cy="1" r="5.800" fill="#282828"/><circle cy="1" r="4.300" fill="#e6e6e6"/><circle cy="1" r="2.700" fill="#282828"/></g><path d="M1436.9 202.9L1442.4 208.7L1447.9 202.9" stroke="#c8c8c8" stroke-width="1.5" fill="none" stroke-linecap="round" stroke-linejoin="round"/><g transform="translate(1472.0 204.7)" stroke="#1fc8a3" stroke-width="1.4" fill="none"><path d="M-5 -7.600H5M-6.500 -5L-1.200 5.200M6.500 -5L1.200 5.200"/><rect x="-10.200" y="-10.200" width="5.200" height="5.200"/><rect x="5" y="-10.200" width="5.200" height="5.200"/><rect x="-2.600" y="5.200" width="5.200" height="5.200"/></g><g transform="translate(1501.2 234.6)"><path d="M0 0V-9.6A9.6 9.6 0 0 1 9.6 0ZM0 0V9.6A9.6 9.6 0 0 1 -9.6 0Z" fill="#c35f6b"/><circle r="9.6" fill="none" stroke="#c35f6b" stroke-width="1.500"/></g><path d="M1410.8 257.9L1416.3 263.4L1410.8 268.9" stroke="#8a8a8a" stroke-width="1.5" fill="none" stroke-linecap="round" stroke-linejoin="round"/><path d="M1435.0 255.8H1451.0L1443.0 270.6Z" stroke="#8b5f3b" stroke-width="4" fill="none" stroke-linejoin="round"/><g transform="translate(1660.0 262.1)" stroke="#1a806b" stroke-width="1.4" fill="none"><path d="M-5 -7.600H5M-6.500 -5L-1.200 5.200M6.500 -5L1.200 5.200"/><rect x="-10.200" y="-10.200" width="5.200" height="5.200"/><rect x="5" y="-10.200" width="5.200" height="5.200"/><rect x="-2.600" y="5.200" width="5.200" height="5.200"/></g><path d="M1853.0 261.3Q1862.5 273.2 1872.0 261.3" stroke="#adadad" stroke-width="1.300" fill="none" stroke-linecap="round"/><g transform="translate(1891.6 262.9)"><path d="M-10.200 -5.500H-5.500L-3.800 -8.500H3.800L5.500 -5.500H10.200V8.500H-10.200Z" fill="#e6e6e6"/><circle cy="1" r="5.800" fill="#282828"/><circle cy="1" r="4.300" fill="#e6e6e6"/><circle cy="1" r="2.700" fill="#282828"/></g><path d="M1410.8 287.0L1416.3 292.5L1410.8 298.0" stroke="#c8c8c8" stroke-width="1.5" fill="none" stroke-linecap="round" stroke-linejoin="round"/><path d="M1435.0 284.9H1451.0L1443.0 299.7Z" stroke="#d18c50" stroke-width="4" fill="none" stroke-linejoin="round"/><g transform="translate(1683.0 291.1)" stroke="#1fc8a3" stroke-width="1.4" fill="none"><path d="M-5 -7.600H5M-6.500 -5L-1.200 5.200M6.500 -5L1.200 5.200"/><rect x="-10.200" y="-10.200" width="5.200" height="5.200"/><rect x="5" y="-10.200" width="5.200" height="5.200"/><rect x="-2.600" y="5.200" width="5.200" height="5.200"/></g><g transform="translate(1862.5 291.9)"><path d="M-10.200 0Q-5 -7 0 -7Q5 -7 10.200 0Q5 7 0 7Q-5 7 -10.200 0Z" fill="#e6e6e6"/><circle r="4.600" fill="#282828"/><circle r="2.200" fill="#e6e6e6"/></g><g transform="translate(1891.6 292.0)"><path d="M-10.200 -5.500H-5.500L-3.800 -8.500H3.800L5.500 -5.500H10.200V8.500H-10.200Z" fill="#e6e6e6"/><circle cy="1" r="5.800" fill="#282828"/><circle cy="1" r="4.300" fill="#e6e6e6"/><circle cy="1" r="2.700" fill="#282828"/></g><path d="M1410.8 316.0L1416.3 321.5L1410.8 327.0" stroke="#c8c8c8" stroke-width="1.5" fill="none" stroke-linecap="round" stroke-linejoin="round"/><path d="M1435.0 313.9H1451.0L1443.0 328.7Z" stroke="#d18c50" stroke-width="4" fill="none" stroke-linejoin="round"/><g transform="translate(1620.0 320.1)" stroke="#1fc8a3" stroke-width="1.4" fill="none"><path d="M-5 -7.600H5M-6.500 -5L-1.200 5.200M6.500 -5L1.200 5.200"/><rect x="-10.200" y="-10.200" width="5.200" height="5.200"/><rect x="5" y="-10.200" width="5.200" height="5.200"/><rect x="-2.600" y="5.200" width="5.200" height="5.200"/></g><g transform="translate(1862.5 320.9)"><path d="M-10.200 0Q-5 -7 0 -7Q5 -7 10.200 0Q5 7 0 7Q-5 7 -10.200 0Z" fill="#e6e6e6"/><circle r="4.600" fill="#282828"/><circle r="2.200" fill="#e6e6e6"/></g><g transform="translate(1891.6 321.0)"><path d="M-10.200 -5.500H-5.500L-3.800 -8.500H3.800L5.500 -5.500H10.200V8.500H-10.200Z" fill="#e6e6e6"/><circle cy="1" r="5.800" fill="#282828"/><circle cy="1" r="4.300" fill="#e6e6e6"/><circle cy="1" r="2.700" fill="#282828"/></g><path d="M1410.8 345.0L1416.3 350.5L1410.8 356.0" stroke="#8a8a8a" stroke-width="1.5" fill="none" stroke-linecap="round" stroke-linejoin="round"/><path d="M1435.0 342.9H1451.0L1443.0 357.7Z" stroke="#8b5f3b" stroke-width="4" fill="none" stroke-linejoin="round"/><g transform="translate(1608.0 349.1)" stroke="#1a806b" stroke-width="1.4" fill="none"><path d="M-5 -7.600H5M-6.500 -5L-1.200 5.200M6.500 -5L1.200 5.200"/><rect x="-10.200" y="-10.200" width="5.200" height="5.200"/><rect x="5" y="-10.200" width="5.200" height="5.200"/><rect x="-2.600" y="5.200" width="5.200" height="5.200"/></g><path d="M1853.0 348.4Q1862.5 360.3 1872.0 348.4" stroke="#adadad" stroke-width="1.300" fill="none" stroke-linecap="round"/><g transform="translate(1891.6 350.0)"><path d="M-10.200 -5.500H-5.500L-3.800 -8.500H3.800L5.500 -5.500H10.200V8.500H-10.200Z" fill="#e6e6e6"/><circle cy="1" r="5.800" fill="#282828"/><circle cy="1" r="4.300" fill="#e6e6e6"/><circle cy="1" r="2.700" fill="#282828"/></g><path d="M1410.8 374.1L1416.3 379.6L1410.8 385.1" stroke="#8a8a8a" stroke-width="1.5" fill="none" stroke-linecap="round" stroke-linejoin="round"/><path d="M1435.0 372.0H1451.0L1443.0 386.8Z" stroke="#8b5f3b" stroke-width="4" fill="none" stroke-linejoin="round"/><g transform="translate(1609.9 378.2)" stroke="#1a806b" stroke-width="1.4" fill="none"><path d="M-5 -7.600H5M-6.500 -5L-1.200 5.200M6.500 -5L1.200 5.200"/><rect x="-10.200" y="-10.200" width="5.200" height="5.200"/><rect x="5" y="-10.200" width="5.200" height="5.200"/><rect x="-2.600" y="5.200" width="5.200" height="5.200"/></g><path d="M1853.0 377.5Q1862.5 389.4 1872.0 377.5" stroke="#adadad" stroke-width="1.300" fill="none" stroke-linecap="round"/><g transform="translate(1891.6 379.1)"><path d="M-10.200 -5.500H-5.500L-3.800 -8.500H3.800L5.500 -5.500H10.200V8.500H-10.200Z" fill="#e6e6e6"/><circle cy="1" r="5.800" fill="#282828"/><circle cy="1" r="4.300" fill="#e6e6e6"/><circle cy="1" r="2.700" fill="#282828"/></g></svg>
<span class="t" style="left:151.3px;top:35.1px;letter-spacing:0.70px;color:#d4d4d4">chassis_243..005</span>
<span class="t" style="left:180.3px;top:64.1px;letter-spacing:0.70px;color:#d4d4d4">J58_Mechanics</span>
<span class="t" style="left:122.2px;top:93.2px;letter-spacing:0.41px;color:#d4d4d4">super_radiatorLM</span>
<span class="t" style="left:151.3px;top:122.2px;letter-spacing:0.70px;color:#d4d4d4">chassis_243..001</span>
<span class="t" style="left:180.3px;top:151.2px;letter-spacing:0.70px;color:#d4d4d4">J58_Mechanics</span>
<span class="t" style="left:122.2px;top:180.2px;letter-spacing:0.56px;color:#7c7c7c">super_rightsideskirt</span>
<span class="t" style="left:122.2px;top:209.3px;letter-spacing:0.54px;color:#d4d4d4">super_rightsideskirtLM</span>
<span class="t" style="left:122.2px;top:238.3px;letter-spacing:0.44px;color:#d4d4d4">super_rollcage</span>
<span class="t" style="left:122.2px;top:267.3px;letter-spacing:0.22px;color:#7c7c7c">super_seat_L</span>
<span class="t" style="left:122.2px;top:296.4px;letter-spacing:0.12px;color:#7c7c7c">super_seat_R</span>
<div class="abs" style="left:0;top:0;width:580px;height:37px;background:#282828"></div>
<div class="btn" style="left:12px;top:3px;width:45.500px;height:28.500px"></div>
<svg class="i" style="left:17px;top:7.500px" width="22" height="20" viewBox="0 0 22 20"><rect x="1.500" y="1" width="7" height="4" rx="0.800" fill="#e0e0e0" stroke="none"/><rect x="12" y="8" width="9.500" height="4" rx="0.800" fill="#e0e0e0" stroke="none"/><rect x="12" y="15" width="9.500" height="4" rx="0.800" fill="#e0e0e0" stroke="none"/><path d="M5 6.500V17H10.500M5 10H10.500" stroke="#c8c8c8" stroke-width="1.500"/></svg>
<svg style="left:43.500px;top:14.500px;color:#e0e0e0" width="11" height="7"><use href="#chev"/></svg>
<div class="btn" style="left:65px;top:3px;width:45.500px;height:28.500px"></div>
<svg class="i" style="left:70px;top:7px" width="23" height="21" viewBox="0 0 23 21"><rect x="7.500" y="1" width="14" height="14" fill="#e0e0e0" stroke="none"/><path d="M9 13L13.500 5.500L18 13ZM16.500 13L18.500 9.500L20.500 13Z" fill="#282828" stroke="none"/><circle cx="18.500" cy="4.500" r="1.300" fill="#282828" stroke="none"/><path d="M4.500 5V17.500H17.500M1.500 8V20.500H14.500" stroke="#c8c8c8" stroke-width="1.400"/></svg>
<svg style="left:96.500px;top:14.500px;color:#e0e0e0" width="11" height="7"><use href="#chev"/></svg>
<div class="btn" style="left:188.500px;top:3px;width:173.500px;height:28.500px;background:#1d1d1d;border-color:#474747"></div>
<svg class="i" style="left:195px;top:7px" width="22" height="22" viewBox="0 0 22 22"><circle cx="13.500" cy="8.500" r="6.200" stroke="#d8d8d8" stroke-width="1.600"/><path d="M9 13.500L1.500 21" stroke="#d8d8d8" stroke-width="1.800"/></svg>
<span class="t" style="left:227.5px;top:7.1px;letter-spacing:0.24px;color:#757575">Search</span>
<div class="btn" style="left:486px;top:3px;width:46px;height:28.500px"></div>
<svg class="i" style="left:490px;top:7.500px" width="21" height="21" viewBox="0 0 21 21"><path d="M1 1.500H20L12.500 11V20L8.500 17V11Z" stroke="#e0e0e0" stroke-width="1.600"/></svg>
<svg style="left:517px;top:14.500px;color:#e0e0e0" width="11" height="7"><use href="#chev"/></svg>
<div class="btn" style="left:539.500px;top:3px;width:28.500px;height:28.500px;background:#545454;border-color:#5c5c5c"></div>
<svg class="i" style="left:542px;top:6px" width="24" height="23" viewBox="0 0 24 23"><path d="M2 7.500V5H13M2 7.500H17V21H2ZM7 13.500H12" stroke="#cfcfcf" stroke-width="1.500"/><circle cx="18" cy="5.500" r="5" fill="#e6e6e6" stroke="none"/><path d="M18 2.500V8.500M15 5.500H21" stroke="#545454" stroke-width="1.500"/></svg>
<div class="abs" style="left:571.500px;top:200.500px;width:5px;height:42px;background:#474747;border-radius:3px"></div>
</div>
<!-- ===== PROPERTIES ===== -->
<div id="props" class="area" style="left:1340px;top:401px;width:580px;height:568.700px;background:#303030">
<div class="abs" style="left:55.0px;top:24.0px;width:512.0px;height:437.6px;background:#3d3d3d;border-radius:5px"></div>
<div class="abs" style="left:55.0px;top:465.2px;width:512.0px;height:34.3px;background:#3d3d3d;border-radius:5px"></div>
<div class="abs" style="left:55.0px;top:502.8px;width:512.0px;height:34.3px;background:#3d3d3d;border-radius:5px"></div>
<div class="abs" style="left:55.0px;top:540.4px;width:512.0px;height:34.3px;background:#3d3d3d;border-radius:5px"></div>
<div class="abs" style="left:0.0px;top:37.0px;width:44.0px;height:531.0px;background:#1d1d1d;"></div>
<div class="abs" style="left:6.0px;top:267.7px;width:38.5px;height:38.0px;background:#303030;border-radius:5px 0 0 5px"></div>
<div class="abs" style="left:6.0px;top:204.0px;width:32.0px;height:1.0px;background:#222222;"></div>
<div class="abs" style="left:6.0px;top:256.0px;width:32.0px;height:1.0px;background:#222222;"></div>
<div class="abs" style="left:6.0px;top:547.6px;width:32.0px;height:1.0px;background:#222222;"></div>
<span class="t" style="left:87.0px;top:35.1px;letter-spacing:0.62px;">Transform</span>
<span class="t" style="left:106.2px;top:434.6px;letter-spacing:0.52px;">Delta Transform</span>
<span class="t" style="left:86.4px;top:472.8px;letter-spacing:0.20px;">Relations</span>
<span class="t" style="left:86.4px;top:510.6px;letter-spacing:0.50px;">Collections</span>
<span class="t" style="left:86.4px;top:548.8px;letter-spacing:0.75px;">Instancing</span>
<div class="abs" style="left:258.2px;top:75.0px;width:237.5px;height:27.2px;background:#545454;border-radius:5px 5px 0 0"></div>
<span class="t" style="left:163.5px;top:77.7px;letter-spacing:0.24px;">Location X</span>
<span class="t" style="left:363.1px;top:77.7px;letter-spacing:0.15px;">0 m</span>
<div class="abs" style="left:258.2px;top:103.7px;width:237.5px;height:27.2px;background:#545454;border-radius:0"></div>
<span class="t" style="left:233.8px;top:106.8px;letter-spacing:0.00px;">Y</span>
<span class="t" style="left:363.1px;top:106.8px;letter-spacing:0.15px;">0 m</span>
<div class="abs" style="left:258.2px;top:132.4px;width:237.5px;height:27.2px;background:#545454;border-radius:0 0 5px 5px"></div>
<span class="t" style="left:234.4px;top:135.5px;letter-spacing:0.00px;">Z</span>
<span class="t" style="left:328.9px;top:135.5px;letter-spacing:1.41px;">-0.30032 m</span>
<div class="abs" style="left:258.2px;top:168.8px;width:237.5px;height:27.2px;background:#545454;border-radius:5px 5px 0 0"></div>
<span class="t" style="left:160.5px;top:171.3px;letter-spacing:0.17px;">Rotation W</span>
<span class="t" style="left:354.1px;top:171.3px;letter-spacing:1.13px;">1.000</span>
<div class="abs" style="left:258.2px;top:197.5px;width:237.5px;height:27.2px;background:#545454;border-radius:0"></div>
<span class="t" style="left:233.6px;top:200.6px;letter-spacing:0.00px;">X</span>
<span class="t" style="left:353.8px;top:200.6px;letter-spacing:1.28px;">0.000</span>
<div class="abs" style="left:258.2px;top:226.4px;width:237.5px;height:27.2px;background:#545454;border-radius:0"></div>
<span class="t" style="left:233.8px;top:229.6px;letter-spacing:0.00px;">Y</span>
<span class="t" style="left:353.8px;top:229.6px;letter-spacing:1.28px;">0.000</span>
<div class="abs" style="left:258.2px;top:255.3px;width:237.5px;height:27.2px;background:#545454;border-radius:0 0 5px 5px"></div>
<span class="t" style="left:234.4px;top:258.7px;letter-spacing:0.00px;">Z</span>
<span class="t" style="left:353.8px;top:258.7px;letter-spacing:1.28px;">0.000</span>
<div class="abs" style="left:258.2px;top:328.0px;width:237.5px;height:27.2px;background:#545454;border-radius:5px 5px 0 0"></div>
<span class="t" style="left:186.4px;top:330.5px;letter-spacing:0.06px;">Scale X</span>
<span class="t" style="left:354.1px;top:330.5px;letter-spacing:1.13px;">1.000</span>
<div class="abs" style="left:258.2px;top:356.7px;width:237.5px;height:27.2px;background:#545454;border-radius:0"></div>
<span class="t" style="left:233.8px;top:359.5px;letter-spacing:0.00px;">Y</span>
<span class="t" style="left:354.1px;top:359.5px;letter-spacing:1.13px;">1.000</span>
<div class="abs" style="left:258.2px;top:385.4px;width:237.5px;height:27.2px;background:#545454;border-radius:0 0 5px 5px"></div>
<span class="t" style="left:234.4px;top:388.6px;letter-spacing:0.00px;">Z</span>
<span class="t" style="left:354.1px;top:388.6px;letter-spacing:1.13px;">1.000</span>
<div class="abs" style="left:258.2px;top:292.0px;width:237.5px;height:27.0px;background:#282828;border-radius:5px;border:1px solid #333"></div>
<span class="t" style="left:199.8px;top:295.4px;letter-spacing:0.84px;">Mode</span>
<span class="t" style="left:268.8px;top:295.4px;letter-spacing:0.36px;">Quaternion (WXYZ)</span>
<svg style="left:0;top:0" width="580" height="568" viewBox="1340 401 580 568"><path d="M1408.7 442.5L1414.2 448.3L1419.7 442.5" stroke="#d0d0d0" stroke-width="1.5" fill="none" stroke-linecap="round" stroke-linejoin="round"/><path d="M1877.5 441.5h1.6v1.6h-1.6zM1877.5 446.3h1.6v1.6h-1.6zM1882.2 441.5h1.6v1.6h-1.6zM1882.2 446.3h1.6v1.6h-1.6zM1886.9 441.5h1.6v1.6h-1.6zM1886.9 446.3h1.6v1.6h-1.6zM1891.6 441.5h1.6v1.6h-1.6zM1891.6 446.3h1.6v1.6h-1.6z" fill="#6e6e6e"/><path d="M1431.3 839.0L1436.8 844.5L1431.3 850.0" stroke="#d0d0d0" stroke-width="1.5" fill="none" stroke-linecap="round" stroke-linejoin="round"/><path d="M1410.8 877.0L1416.3 882.5L1410.8 888.0" stroke="#d0d0d0" stroke-width="1.5" fill="none" stroke-linecap="round" stroke-linejoin="round"/><path d="M1410.8 914.8L1416.3 920.3L1410.8 925.8" stroke="#d0d0d0" stroke-width="1.5" fill="none" stroke-linecap="round" stroke-linejoin="round"/><path d="M1410.8 952.7L1416.3 958.2L1410.8 963.7" stroke="#d0d0d0" stroke-width="1.5" fill="none" stroke-linecap="round" stroke-linejoin="round"/><path d="M1877.5 880.5h1.6v1.6h-1.6zM1877.5 885.3h1.6v1.6h-1.6zM1882.2 880.5h1.6v1.6h-1.6zM1882.2 885.3h1.6v1.6h-1.6zM1886.9 880.5h1.6v1.6h-1.6zM1886.9 885.3h1.6v1.6h-1.6zM1891.6 880.5h1.6v1.6h-1.6zM1891.6 885.3h1.6v1.6h-1.6z" fill="#6e6e6e"/><path d="M1877.5 918.2h1.6v1.6h-1.6zM1877.5 923.0h1.6v1.6h-1.6zM1882.2 918.2h1.6v1.6h-1.6zM1882.2 923.0h1.6v1.6h-1.6zM1886.9 918.2h1.6v1.6h-1.6zM1886.9 923.0h1.6v1.6h-1.6zM1891.6 918.2h1.6v1.6h-1.6zM1891.6 923.0h1.6v1.6h-1.6z" fill="#6e6e6e"/><path d="M1877.5 956.0h1.6v1.6h-1.6zM1877.5 960.8h1.6v1.6h-1.6zM1882.2 956.0h1.6v1.6h-1.6zM1882.2 960.8h1.6v1.6h-1.6zM1886.9 956.0h1.6v1.6h-1.6zM1886.9 960.8h1.6v1.6h-1.6zM1891.6 956.0h1.6v1.6h-1.6zM1891.6 960.8h1.6v1.6h-1.6z" fill="#6e6e6e"/><g transform="translate(1851.0 489.4)" fill="none" stroke="#bdbdbd" stroke-width="1.300"><path d="M-9.500 -1V-4.200A4.300 4.300 0 0 1 -1 -4.200V0.500"/><rect x="-1.200" y="0.300" width="11.500" height="9" rx="0.800"/><path d="M4.500 3.300V6.200" stroke-width="1.600"/></g><circle cx="1880.3" cy="490.1" r="3.100" fill="#e6e6e6"/><g transform="translate(1851.0 518.5)" fill="none" stroke="#bdbdbd" stroke-width="1.300"><path d="M-9.500 -1V-4.200A4.300 4.300 0 0 1 -1 -4.200V0.500"/><rect x="-1.200" y="0.300" width="11.500" height="9" rx="0.800"/><path d="M4.500 3.300V6.200" stroke-width="1.600"/></g><circle cx="1880.3" cy="519.2" r="3.100" fill="#e6e6e6"/><g transform="translate(1851.0 547.2)" fill="none" stroke="#bdbdbd" stroke-width="1.300"><path d="M-9.500 -1V-4.200A4.300 4.300 0 0 1 -1 -4.200V0.500"/><rect x="-1.200" y="0.300" width="11.500" height="9" rx="0.800"/><path d="M4.500 3.300V6.200" stroke-width="1.600"/></g><circle cx="1880.3" cy="547.9" r="3.100" fill="#e6e6e6"/><g transform="translate(1851.0 583.0)" fill="none" stroke="#bdbdbd" stroke-width="1.300"><path d="M-9.500 -1V-4.200A4.300 4.300 0 0 1 -1 -4.200V0.500"/><rect x="-1.200" y="0.300" width="11.500" height="9" rx="0.800"/><path d="M4.500 3.300V6.200" stroke-width="1.600"/></g><circle cx="1880.3" cy="583.7" r="3.100" fill="#e6e6e6"/><g transform="translate(1851.0 612.3)" fill="none" stroke="#bdbdbd" stroke-width="1.300"><path d="M-9.500 -1V-4.200A4.300 4.300 0 0 1 -1 -4.200V0.500"/><rect x="-1.200" y="0.300" width="11.500" height="9" rx="0.800"/><path d="M4.500 3.300V6.200" stroke-width="1.600"/></g><circle cx="1880.3" cy="613.0" r="3.100" fill="#e6e6e6"/><g transform="translate(1851.0 641.3)" fill="none" stroke="#bdbdbd" stroke-width="1.300"><path d="M-9.500 -1V-4.200A4.300 4.300 0 0 1 -1 -4.200V0.500"/><rect x="-1.200" y="0.300" width="11.500" height="9" rx="0.800"/><path d="M4.500 3.300V6.200" stroke-width="1.600"/></g><circle cx="1880.3" cy="642.0" r="3.100" fill="#e6e6e6"/><g transform="translate(1851.0 670.4)" fill="none" stroke="#bdbdbd" stroke-width="1.300"><path d="M-9.500 -1V-4.200A4.300 4.300 0 0 1 -1 -4.200V0.500"/><rect x="-1.200" y="0.300" width="11.500" height="9" rx="0.800"/><path d="M4.500 3.300V6.200" stroke-width="1.600"/></g><circle cx="1880.3" cy="671.1" r="3.100" fill="#e6e6e6"/><g transform="translate(1851.0 742.2)" fill="none" stroke="#bdbdbd" stroke-width="1.300"><path d="M-9.500 -1V-4.200A4.300 4.300 0 0 1 -1 -4.200V0.500"/><rect x="-1.200" y="0.300" width="11.500" height="9" rx="0.800"/><path d="M4.500 3.300V6.200" stroke-width="1.600"/></g><circle cx="1880.3" cy="742.9" r="3.100" fill="#e6e6e6"/><g transform="translate(1851.0 771.2)" fill="none" stroke="#bdbdbd" stroke-width="1.300"><path d="M-9.500 -1V-4.200A4.300 4.300 0 0 1 -1 -4.200V0.500"/><rect x="-1.200" y="0.300" width="11.500" height="9" rx="0.800"/><path d="M4.500 3.300V6.200" stroke-width="1.600"/></g><circle cx="1880.3" cy="771.9" r="3.100" fill="#e6e6e6"/><g transform="translate(1851.0 800.3)" fill="none" stroke="#bdbdbd" stroke-width="1.300"><path d="M-9.500 -1V-4.200A4.300 4.300 0 0 1 -1 -4.200V0.500"/><rect x="-1.200" y="0.300" width="11.500" height="9" rx="0.800"/><path d="M4.500 3.300V6.200" stroke-width="1.600"/></g><circle cx="1880.3" cy="801.0" r="3.100" fill="#e6e6e6"/><path d="M1822.500 704.500L1827.500 709.500L1832.500 704.500" stroke="#e0e0e0" stroke-width="1.700" fill="none" stroke-linecap="round" stroke-linejoin="round"/><circle cx="1880.3" cy="706.7" r="3.100" fill="#e6e6e6"/></svg>
<div class="abs" style="left:0.0px;top:0.0px;width:580.0px;height:37.6px;background:#303030;"></div>
<div class="btn" style="left:12px;top:5px;width:44.500px;height:28.500px"></div>
<svg class="i" style="left:17.500px;top:10px" width="22" height="20" viewBox="0 0 22 20"><rect x="1" y="1" width="19" height="7.500" rx="3.750" stroke="#e4e4e4" stroke-width="1.500"/><path d="M4.750 1H9.500V8.500H4.750A3.750 3.750 0 0 1 4.750 1Z" fill="#e4e4e4" stroke="none"/><rect x="1" y="11.500" width="19" height="7.500" rx="3.750" stroke="#e4e4e4" stroke-width="1.500"/><path d="M4.750 11.500H14V19H4.750A3.750 3.750 0 0 1 4.750 11.500Z" fill="#e4e4e4" stroke="none"/></svg>
<svg style="left:42.500px;top:17px;color:#e0e0e0" width="11" height="7"><use href="#chev"/></svg>
<div class="btn" style="left:207px;top:5px;width:173px;height:28.500px;background:#1d1d1d;border-color:#474747"></div>
<svg class="i" style="left:213px;top:9px" width="22" height="22" viewBox="0 0 22 22"><circle cx="13.500" cy="8.500" r="6.200" stroke="#d8d8d8" stroke-width="1.600"/><path d="M9 13.500L1.500 21" stroke="#d8d8d8" stroke-width="1.800"/></svg>
<span class="t" style="left:245.3px;top:8.9px;letter-spacing:0.24px;color:#757575">Search</span>
<div class="btn" style="left:539.500px;top:5px;width:28.500px;height:28.500px"></div>
<svg style="left:548px;top:17px;color:#e0e0e0" width="11" height="7"><use href="#chev"/></svg>
<div class="abs" style="left:571.5px;top:107.0px;width:5.0px;height:291.0px;background:#474747;border-radius:3px"></div>
<svg style="left:0;top:0" width="60" height="568" viewBox="1340 401 60 568"><g transform="translate(1365 463.400)"><path d="M-8.500 -4.500V-7.500Q-8.500 -9.500 -6.500 -9.500H6.500Q8.500 -9.500 8.500 -7.500V-4.500H10.500V1.500H7V-2.500H-7V1.500H-10.500V-4.500Z" fill="#b4b4b4"/><path d="M-5.500 -1H5.500V9.500H-5.500Z" fill="#b4b4b4"/><path d="M-4 7.500L0 1.500L4 7.500Z" fill="#1d1d1d"/><circle cx="3" cy="1.500" r="1" fill="#1d1d1d"/></g><g transform="translate(1365 503.400)"><rect x="-3.500" y="-10" width="14" height="14" fill="#b4b4b4"/><path d="M-2 2.500L2.500 -5L7 2.500ZM5.500 2.500L7.500 -1L9.500 2.500Z" fill="#1d1d1d"/><circle cx="7.500" cy="-7" r="1.200" fill="#1d1d1d"/><path d="M-6.500 -6V7H6.500M-9.500 -3V10H3.500" stroke="#b4b4b4" stroke-width="1.400" fill="none"/></g><g transform="translate(1365 543.100)"><path d="M-5 -11L-10.500 3.500Q-10.500 6 -6.500 6Q-3.500 6 -2 4Q-3 0 -1 -3Z" fill="#b4b4b4"/><circle cx="7.500" cy="-8" r="3" fill="#b4b4b4"/><circle cx="4.500" cy="4" r="5.600" fill="none" stroke="#b4b4b4" stroke-width="1.500"/><path d="M1.500 3A3.200 3.200 0 0 1 4 0.800" stroke="#b4b4b4" stroke-width="1" fill="none"/></g><g transform="translate(1365 583.900)"><circle r="9.600" fill="none" stroke="#c75f6c" stroke-width="1.500"/><path d="M-6 -6Q-2 -8.500 0 -5.500Q3 -4.500 1.500 -1.500Q-1 0.500 -3.500 -1Q-7 -2 -6 -6ZM2 2Q6 1 7.500 4Q6 8 2.500 8Q0 5 2 2Z" fill="#c75f6c"/><path d="M-11 10L11 -10" stroke="#c75f6c" stroke-width="1.400"/></g><g transform="translate(1365 635.200)" fill="none" stroke="#e0e0e0" stroke-width="1.600"><rect x="-9.500" y="-9.500" width="19" height="5"/><path d="M-8 -4.500V9.500H8V-4.500"/><path d="M-2.500 0.500H2.500" stroke-width="2.400" stroke-linecap="round"/></g><g transform="translate(1365 687.700)"><rect x="-5.800" y="-5.800" width="11.600" height="11.600" fill="#e8954f"/><path d="M-10.500 -5.500V-9Q-10.500 -10.500 -9 -10.500H-5.500M5.500 -10.500H9Q10.500 -10.500 10.500 -9V-5.500M10.500 5.500V9Q10.500 10.500 9 10.500H5.500M-5.500 10.500H-9Q-10.500 10.500 -10.500 9V5.500" stroke="#c98449" stroke-width="1.400" fill="none"/></g><g transform="translate(1365 727)"><path d="M-9.500 7.500L-0.500 -1.500Q-2 -6.500 2 -9.500Q4.500 -11 7.500 -10L3.500 -6L4.500 -2.500L8 -1.500L11.500 -5.500Q12.500 -2 10 1Q7 4 2.500 2.500L-6 10.500Q-8 12 -9.700 10.300Q-11 9 -9.500 7.500Z" fill="#5b87d8"/></g><g transform="translate(1365 768.500)" fill="#5b87d8" stroke="#5b87d8"><circle cx="-6.500" cy="-6" r="4" stroke="none"/><circle cx="7.500" cy="-6" r="2.200" stroke="none"/><circle cx="7.500" cy="8" r="3" stroke="none"/><circle cx="-6.500" cy="9" r="2" stroke="none"/><path d="M-6.500 -6H7.500M-6.500 -6V9M-6.500 -6L7.500 8" stroke-width="1.300" fill="none"/></g><g transform="translate(1365 807.200)"><circle cx="-1" cy="1" r="4" fill="#5b87d8"/><circle cx="7.500" cy="-7.500" r="2.800" fill="#5b87d8"/><path d="M3.500 -8A10 10 0 1 0 9 5.500" stroke="#5b87d8" stroke-width="1.400" fill="none"/></g><g transform="translate(1365 848.900)" fill="none" stroke="#5b87d8" stroke-width="1.500"><path d="M-3.500 -5.500L6 -10.500Q10.500 -11.500 10 -7L7.500 3.500Q5 10 -2 10Q-10 9.500 -10 2Q-9.500 -3 -3.500 -5.500Z"/><circle cx="-2.500" cy="2.500" r="3.800"/><circle cx="-2.500" cy="2.500" r="1.200" fill="#5b87d8"/><circle cx="6.500" cy="-6.500" r="1.300" fill="#5b87d8"/></g><g transform="translate(1365 886.800)" stroke="#1fc8a3" stroke-width="1.500" fill="none"><path d="M-5 -7.600H5M-6.500 -5L-1.200 5.200M6.500 -5L1.200 5.200"/><rect x="-10.200" y="-10.200" width="5.200" height="5.200"/><rect x="5" y="-10.200" width="5.200" height="5.200"/><rect x="-2.600" y="5.200" width="5.200" height="5.200"/></g><g transform="translate(1365 927.600)"><path d="M0 0V-9.800A9.800 9.800 0 0 1 9.800 0ZM0 0V9.800A9.800 9.800 0 0 1 -9.800 0Z" fill="#c35f6b"/><circle r="9.800" fill="none" stroke="#c35f6b" stroke-width="1.500"/></g></svg>
</div>
<!-- ===== TIMELINE ===== -->
<div id="timeline" class="area" style="left:0;top:976px;width:1232.5px;height:72px;background:#1d1d1d">
<div class="abs" style="left:0;top:0;width:1233px;height:37px;background:#303030"></div>
<div class="btn" style="left:12px;top:4px;width:44.500px;height:29px"></div>
<svg style="left:18px;top:7.700px" width="22" height="22" viewBox="0 0 22 22"><circle cx="11" cy="11" r="10.400" fill="#e6e6e6"/><path d="M13.500 4.500L7.500 12L12 17.500" fill="none" stroke="#282828" stroke-width="2.800" stroke-linejoin="round" stroke-linecap="butt"/></svg>
<svg style="left:41.700px;top:16.500px;color:#e0e0e0" width="11" height="7"><use href="#chev"/></svg>
<div class="btn" style="left:64px;top:4px;width:197px;height:29px"></div>
<div class="abs" style="left:169.500px;top:6px;width:1px;height:26px;background:#3b3b3b"></div>
<span class="t" style="left:75.8px;top:8.2px;letter-spacing:0.35px;">Playback</span>
<svg style="left:154.500px;top:16.500px;color:#e0e0e0" width="11" height="7"><use href="#chev"/></svg>
<span class="t" style="left:180.8px;top:8.2px;letter-spacing:0.79px;">Keying</span>
<svg style="left:246px;top:16.500px;color:#e0e0e0" width="11" height="7"><use href="#chev"/></svg>
<span class="t" style="left:274.8px;top:8.2px;letter-spacing:1.04px;">View</span><span class="t" style="left:334.8px;top:8.2px;letter-spacing:0.81px;">Marker</span>
<!-- autokey -->
<div class="btn" style="left:483px;top:4px;width:56.500px;height:29px;overflow:hidden;background:#2a2a2a"><div class="abs" style="left:0;top:0;width:27px;height:27px;background:#545454"></div></div>
<svg class="i" style="left:488px;top:10.500px" width="17" height="17" viewBox="0 0 17 17"><circle cx="8.500" cy="8.500" r="7" stroke="#d6d6d6" stroke-width="1.400"/></svg>
<svg style="left:519.500px;top:16.500px;color:#5e5e5e" width="10" height="7"><use href="#chev"/></svg>
<!-- transport -->
<div class="fld" style="left:548px;top:5px;width:172px;height:27.500px;border-radius:5px"></div>
<svg style="left:548px;top:5px" width="172" height="28" viewBox="548 981 172 28" fill="#e8e8e8">
 <path d="M575.400 981V1009M604.500 981V1009M633.200 981V1009M662.300 981V1009M691.300 981V1009" stroke="#474747" stroke-width="1" fill="none"/>
 <rect x="554" y="987.500" width="2.600" height="15"/><path d="M568.500 987.500V1002.500L558 995Z"/>
 <path d="M585.200 987.500L591.800 995L585.200 1002.500L578.600 995Z"/><path d="M601.500 989V1001L593.500 995Z"/>
 <path d="M626.500 986.500V1003.500L611.500 995Z"/>
 <path d="M641 986.500V1003.500L656 995Z"/>
 <path d="M666 989V1001L674 995Z"/><path d="M682.300 987.500L688.900 995L682.300 1002.500L675.700 995Z"/>
 <path d="M699.500 987.500V1002.500L710 995Z"/><rect x="711.200" y="987.500" width="2.600" height="15"/>
</svg>
<!-- current frame -->
<div class="fld" style="left:824.500px;top:5px;width:107px;height:27.500px"></div>
<span class="t" style="left:868.0px;top:8.2px;letter-spacing:4.33px;">-1</span>
<!-- range -->
<div class="fld" style="left:939.500px;top:5px;width:281px;height:27.500px"></div>
<div class="abs" style="left:967px;top:5px;width:1px;height:27.500px;background:#474747"></div>
<div class="abs" style="left:1096.300px;top:5px;width:1px;height:27.500px;background:#474747"></div>
<svg class="i" style="left:943px;top:7px" width="22" height="24" viewBox="0 0 22 24"><circle cx="10" cy="13.500" r="8.600" stroke="#e6e6e6" stroke-width="1.600"/><path d="M10 8V14H15M7 1.500H13M10 1.500V4.500M17 5L19.500 3" stroke="#e6e6e6" stroke-width="1.600"/></svg>
<span class="t" style="left:991.4px;top:8.2px;letter-spacing:0.14px;">Start</span><span class="t" style="left:1066.4px;top:8.2px;letter-spacing:0.00px;">1</span><span class="t" style="left:1120.3px;top:8.2px;letter-spacing:-0.18px;">End</span><span class="t" style="left:1167.7px;top:8.2px;letter-spacing:1.98px;">250</span>
<!-- frame numbers -->
<div class="abs" style="left:18.700px;top:41.300px;width:35.800px;height:26px;background:#4772b3;border-radius:5px"></div>
<span class="t" style="left:27.5px;top:45.2px;letter-spacing:2.83px;color:#fff">-1</span>
<span class="t" style="left:122.8px;top:45.2px;letter-spacing:2.65px;color:#b4b4b4">20</span><span class="t" style="left:213.0px;top:45.2px;letter-spacing:3.15px;color:#b4b4b4">40</span><span class="t" style="left:305.0px;top:45.2px;letter-spacing:3.15px;color:#b4b4b4">60</span><span class="t" style="left:397.0px;top:45.2px;letter-spacing:3.15px;color:#b4b4b4">80</span>
<span class="t" style="left:484.0px;top:45.2px;letter-spacing:1.83px;color:#b4b4b4">100</span><span class="t" style="left:575.9px;top:45.2px;letter-spacing:1.83px;color:#b4b4b4">120</span><span class="t" style="left:667.0px;top:45.2px;letter-spacing:1.88px;color:#b4b4b4">140</span><span class="t" style="left:759.0px;top:45.2px;letter-spacing:1.83px;color:#b4b4b4">160</span><span class="t" style="left:851.1px;top:45.2px;letter-spacing:1.63px;color:#b4b4b4">180</span><span class="t" style="left:942.1px;top:45.2px;letter-spacing:1.88px;color:#b4b4b4">200</span><span class="t" style="left:1034.0px;top:45.2px;letter-spacing:1.73px;color:#b4b4b4">220</span><span class="t" style="left:1125.2px;top:45.2px;letter-spacing:1.73px;color:#b4b4b4">240</span>
</div>
<!-- ===== NODE EDITOR ===== -->
<div id="nodeed" class="area dk" style="left:1238.500px;top:976px;width:681.500px;height:72px;background:#1d1d1d">
<div class="btn" style="left:10px;top:4px;width:46px;height:29px"></div>
<svg style="left:16px;top:8px" width="24" height="22" viewBox="0 0 24 22"><circle cx="4.500" cy="3.500" r="2.300" fill="#8a8a8a"/><circle cx="11.500" cy="4.500" r="2.800" fill="#9a9a9a"/><circle cx="7.500" cy="11.500" r="3.700" fill="#bcbcbc"/><circle cx="17.500" cy="15.500" r="5.400" fill="#ececec"/></svg>
<svg style="left:42px;top:16.500px;color:#e0e0e0" width="11" height="7"><use href="#chev"/></svg>
<div class="btn" style="left:63px;top:4px;width:116px;height:29px"></div>
<span class="t" style="left:76.0px;top:8.2px;letter-spacing:0.73px;">Modifier</span>
<svg style="left:164.500px;top:16.500px;color:#e0e0e0" width="11" height="7"><use href="#chev"/></svg>
<span class="t" style="left:197.3px;top:8.2px;letter-spacing:0.91px;">View</span><span class="t" style="left:257.3px;top:8.2px;letter-spacing:0.63px;">Select</span><span class="t" style="left:329.8px;top:8.2px;letter-spacing:0.32px;">Add</span><span class="t" style="left:382.5px;top:8.2px;letter-spacing:0.52px;">Node</span>
<div class="btn" style="left:457px;top:4px;width:220px;height:29px;overflow:hidden"><div class="abs" style="left:45px;top:0;width:175px;height:27px;background:#545454"></div></div>
<svg class="i" style="left:463px;top:8px" width="24" height="22" viewBox="0 0 24 22"><rect x="5" y="1" width="11.500" height="8" rx="2" fill="#e0e0e0" stroke="none"/><path d="M6.500 6.300H15" stroke="#282828" stroke-width="1"/><rect x="1.500" y="13" width="12" height="8.500" rx="2" fill="#e0e0e0" stroke="none"/><path d="M3 18.500H12" stroke="#282828" stroke-width="1"/><path d="M18 4.500Q22 5 22 10Q22 17 16 17.500" stroke="#d0d0d0" stroke-width="1.400"/><path d="M18 15.500L15.500 17.500L18 19.500Z" fill="#d0d0d0" stroke="none"/></svg>
<svg style="left:490.500px;top:16.500px;color:#e0e0e0" width="11" height="7"><use href="#chev"/></svg>
<svg class="i" style="left:513px;top:11.500px" width="15" height="15" viewBox="0 0 15 15"><path d="M7.500 0.500V14.500M0.500 7.500H14.500" stroke="#e6e6e6" stroke-width="1.300" stroke-linecap="butt"/></svg>
<span class="t" style="left:585.3px;top:8.2px;letter-spacing:0.90px;">New</span>
<!-- sidebar panel -->
<div class="abs" style="left:273px;top:39px;width:395px;height:40px;background:#3d3d3d;border-radius:6px"></div>
<svg style="left:284px;top:54px;color:#d8d8d8" width="13.500" height="8.500"><use href="#chev"/></svg>
<span class="t" style="left:303.8px;top:47.8px;letter-spacing:0.73px;">Active Tool</span>
<svg style="left:639px;top:53.500px" width="17" height="8" viewBox="0 0 17 8"><path d="M0 0h1.600v1.600h-1.600zM4.700 0h1.600v1.600h-1.600zM9.400 0h1.600v1.600h-1.600zM14.100 0h1.600v1.600h-1.600zM0 4.800h1.600v1.600h-1.600zM4.700 4.800h1.600v1.600h-1.600zM9.400 4.800h1.600v1.600h-1.600zM14.100 4.800h1.600v1.600h-1.600z" fill="#858585"/></svg>
<div class="abs" style="left:672.500px;top:39px;width:5.500px;height:34px;background:#363636;border-radius:3px"></div>
<div class="abs" style="left:11.500px;top:64px;width:262px;height:5px;background:#3a3a3a;border-radius:3px 0 0 3px"></div>
</div>
<!-- ===== STATUS BAR ===== -->
<div id="status" class="abs" style="left:0;top:1048px;width:1920px;height:32px;background:#181818">
<svg class="i" style="left:14px;top:3.500px" width="18" height="24" viewBox="0 0 18 24"><rect x="1" y="1" width="16" height="22" rx="4.500" stroke="#8e8e8e" stroke-width="1.500"/><path d="M1 12.500V5.500Q1 1 5.500 1H8V12.500Z" fill="#858585" stroke="none"/></svg>
<span class="t" style="left:33.2px;top:5.3px;letter-spacing:0.28px;color:#959595">Select (List)</span>
<svg class="i" style="left:141px;top:3.500px" width="18" height="24" viewBox="0 0 18 24"><rect x="1" y="1" width="16" height="22" rx="4.500" stroke="#8e8e8e" stroke-width="1.500"/><rect x="6" y="3.500" width="6" height="10" rx="1.800" fill="#858585" stroke="none"/></svg>
<span class="t" style="left:159.2px;top:5.3px;letter-spacing:0.45px;color:#959595">Center View to Mouse</span>
<svg class="i" style="left:1819px;top:5px" width="22" height="22" viewBox="0 0 22 22"><circle cx="11" cy="11" r="8.500" stroke="#6e6e6e" stroke-width="1.300"/><path d="M2.500 11H19.500M11 2.500Q5.500 11 11 19.500M11 2.500Q16.500 11 11 19.500M4 6.500H18M4 15.500H18" stroke="#6e6e6e" stroke-width="1.200"/><path d="M2 2L20.500 20.500" stroke="#7c7c7c" stroke-width="1.500"/></svg>
<div class="abs" style="left:1853.500px;top:6px;width:1.500px;height:20px;background:#8a8a8a"></div>
<span class="t" style="left:1861.0px;top:5.3px;letter-spacing:0.58px;color:#959595">4.5.3</span>
<div class="abs" style="left:54px;top:30px;width:386.500px;height:2px;background:#d2d2d2"></div>
<div class="abs" style="left:785px;top:30px;width:48px;height:2px;background:#4c4c4c"></div>
</div>
</div>
</body>
</html>
